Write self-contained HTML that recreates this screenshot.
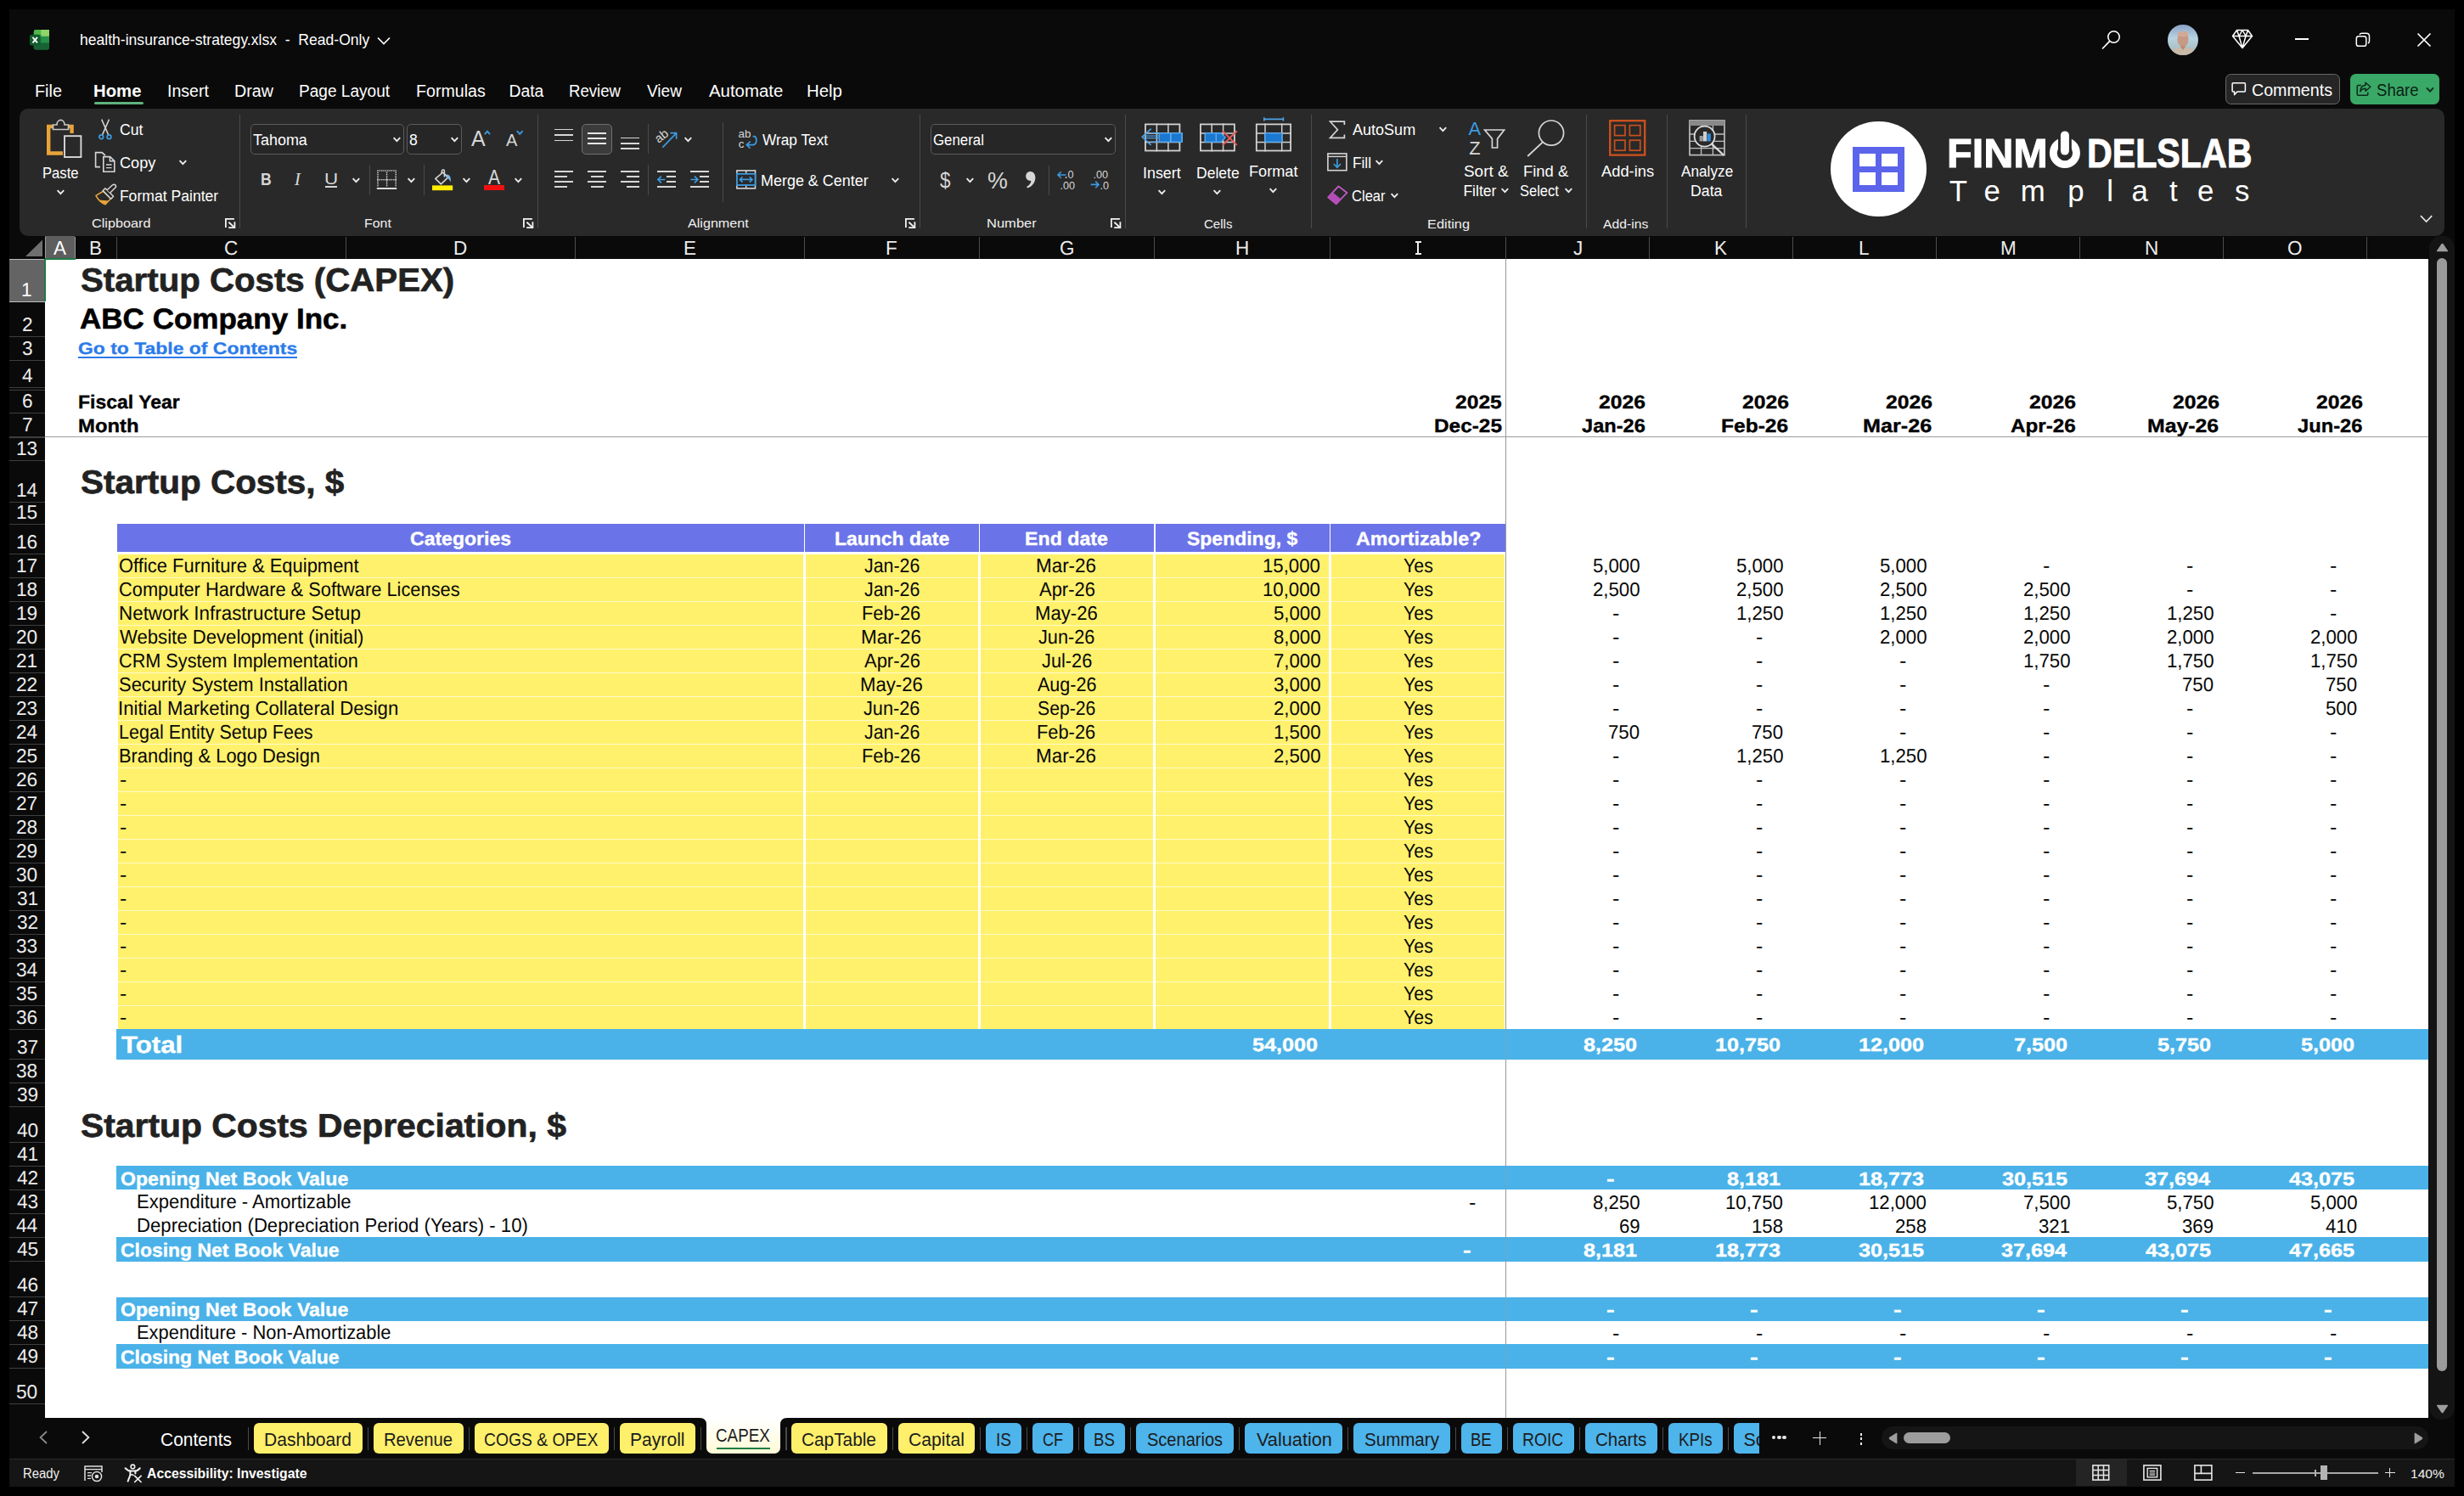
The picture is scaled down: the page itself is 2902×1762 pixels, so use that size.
<!DOCTYPE html>
<html><head><meta charset="utf-8"><title>health-insurance-strategy.xlsx - Excel</title>
<style>
html,body{margin:0;padding:0;background:#000;}
body{width:2902px;height:1762px;position:relative;overflow:hidden;font-family:"Liberation Sans",sans-serif;}
.t{position:absolute;white-space:pre;line-height:1;transform-origin:0 0;display:block;}
.g{text-rendering:geometricPrecision;}
.b{position:absolute;}
svg{position:absolute;overflow:visible;}
</style></head><body>
<div class="b" style="left:11px;top:11px;width:2880px;height:1740px;background:#0a0a0a;"></div>
<svg style="left:35px;top:35.2px" width="23" height="23.4" viewBox="0 0 24 24" preserveAspectRatio="none">
<rect x="5" y="0" width="19" height="24" rx="2.5" fill="#1e7b3d"/>
<rect x="5" y="0" width="19" height="8" rx="2.5" fill="#4fb74a"/>
<rect x="14" y="0" width="10" height="8" fill="#8fd568"/>
<rect x="14" y="0" width="10" height="8" rx="2.5" fill="#8fd568"/>
<rect x="5" y="6" width="9" height="4" fill="#2f9a46"/>
<rect x="14" y="8" width="10" height="8" fill="#27914a"/>
<rect x="5" y="16" width="19" height="6" fill="#176334"/>
<rect x="5" y="20" width="19" height="4" rx="2.5" fill="#176334"/>
<rect x="0" y="6" width="13" height="13" rx="2" fill="#125c2e"/>
<path d="M3.6 9.2 L6.5 12.5 L3.6 15.8 M9.4 9.2 L6.5 12.5 L9.4 15.8" stroke="#fff" stroke-width="1.9" fill="none"/>
</svg>
<span class="t" style="left:94.31px;top:39.40px;font-size:17.8px;color:#fff;transform:scaleX(0.9877);">health-insurance-strategy.xlsx  -  Read-Only</span>
<svg style="left:444px;top:43px" width="16" height="10" viewBox="0 0 16 10"><path d="M1 1.5 L8 8.5 L15 1.5" stroke="#fff" stroke-width="1.7" fill="none"/></svg>
<svg style="left:2475px;top:35px" width="23" height="24" viewBox="0 0 23 24"><circle cx="14.5" cy="8.5" r="6.7" stroke="#fff" stroke-width="1.6" fill="none"/><path d="M9.8 13.4 L1 22.5" stroke="#fff" stroke-width="1.7"/></svg>
<svg style="left:2553px;top:29px" width="36" height="36" viewBox="0 0 36 36">
<defs><clipPath id="av"><circle cx="18" cy="18" r="18"/></clipPath>
<linearGradient id="avg" x1="0" y1="0" x2="0" y2="1"><stop offset="0" stop-color="#8aa3c9"/><stop offset="0.45" stop-color="#b8d3df"/><stop offset="1" stop-color="#9fb7b9"/></linearGradient></defs>
<g clip-path="url(#av)"><rect width="36" height="36" fill="url(#avg)"/>
<ellipse cx="18" cy="17.5" rx="6.6" ry="8.6" fill="#c89a86"/>
<ellipse cx="18" cy="11" rx="6.2" ry="3.2" fill="#d3a994"/>
<path d="M2 36 C4 28 11 26.5 18 26.5 C25 26.5 32 28 34 36 Z" fill="#c9b9a8"/>
<path d="M14.5 25 L18 30 L21.5 25 Z" fill="#b98a76"/>
</g></svg>
<svg style="left:2628px;top:34px" width="26" height="24" viewBox="0 0 26 24"><path d="M6.5 1.5 H19.5 L24.5 8.5 L13 22.5 L1.5 8.5 Z M1.5 8.5 H24.5 M6.5 1.5 L9 8.5 L13 22.5 L17 8.5 L19.5 1.5 M9 8.5 L13 1.5 L17 8.5" stroke="#fff" stroke-width="1.5" fill="none" stroke-linejoin="round"/></svg>
<div class="b" style="left:2703px;top:45.3px;width:16px;height:1.6px;background:#fff;"></div>
<svg style="left:2774px;top:38px" width="18" height="18" viewBox="0 0 18 18"><rect x="1.3" y="4.8" width="11.5" height="11.5" rx="2.6" stroke="#fff" stroke-width="1.5" fill="none"/><path d="M5 2.9 C5.5 1.9 6.3 1.3 7.5 1.3 H13 C15 1.3 16.5 2.8 16.5 4.8 V10.5 C16.5 11.6 16 12.4 15 13" stroke="#fff" stroke-width="1.5" fill="none"/></svg>
<svg style="left:2846px;top:38px" width="18" height="18" viewBox="0 0 18 18"><path d="M1.5 1.5 L16.5 16.5 M16.5 1.5 L1.5 16.5" stroke="#fff" stroke-width="1.7" fill="none"/></svg>
<span class="t" style="left:40.91px;top:97.60px;font-size:19.4px;color:#fff;transform:scaleX(1.0223);">File</span>
<span class="t" style="left:196.74px;top:97.60px;font-size:19.4px;color:#fff;transform:scaleX(1.0074);">Insert</span>
<span class="t" style="left:275.92px;top:97.60px;font-size:19.4px;color:#fff;transform:scaleX(1.0161);">Draw</span>
<span class="t" style="left:351.97px;top:97.60px;font-size:19.4px;color:#fff;transform:scaleX(0.9834);">Page Layout</span>
<span class="t" style="left:489.93px;top:97.60px;font-size:19.4px;color:#fff;transform:scaleX(1.0112);">Formulas</span>
<span class="t" style="left:599.45px;top:97.60px;font-size:19.4px;color:#fff;">Data</span>
<span class="t" style="left:670.01px;top:97.60px;font-size:19.4px;color:#fff;transform:scaleX(0.9577);">Review</span>
<span class="t" style="left:761.95px;top:97.60px;font-size:19.4px;color:#fff;transform:scaleX(0.9830);">View</span>
<span class="t" style="left:834.50px;top:97.60px;font-size:19.4px;color:#fff;transform:scaleX(1.0522);">Automate</span>
<span class="t" style="left:949.87px;top:97.60px;font-size:19.4px;color:#fff;transform:scaleX(1.0522);">Help</span>
<span class="t" style="left:110.18px;top:97.60px;font-size:19.4px;color:#fff;font-weight:bold;transform:scaleX(1.0482);">Home</span>
<div class="b" style="left:111px;top:120px;width:58px;height:3px;background:#5db37e;border-radius:1.5px;"></div>
<div class="b" style="left:2621px;top:87px;width:135px;height:36px;background:#262626;border:1px solid #686868;border-radius:6.5px;box-sizing:border-box;"></div>
<svg style="left:2628px;top:96px" width="18" height="18" viewBox="0 0 18 18"><path d="M2 1.8 H15.5 C16.1 1.8 16.4 2.1 16.4 2.7 V11 C16.4 11.6 16.1 11.9 15.5 11.9 H7 L3.6 15.6 V11.9 H2 C1.4 11.9 1.1 11.6 1.1 11 V2.7 C1.1 2.1 1.4 1.8 2 1.8 Z" stroke="#fff" stroke-width="1.5" fill="none" stroke-linejoin="round"/></svg>
<span class="t" style="left:2651.62px;top:96.60px;font-size:19.4px;color:#fff;transform:scaleX(1.0136);">Comments</span>
<div class="b" style="left:2768px;top:87px;width:105px;height:36px;background:#3aa867;border-radius:6.5px;"></div>
<svg style="left:2774px;top:95px" width="20" height="20" viewBox="0 0 20 20"><path d="M7 5.5 H3.5 C2.7 5.5 2.2 6 2.2 6.8 V16 C2.2 16.8 2.7 17.3 3.5 17.3 H13.5 C14.3 17.3 14.8 16.8 14.8 16 V13.5" stroke="#0d2a18" stroke-width="1.5" fill="none"/><path d="M12 2.2 L17.8 7.2 L12 12.2 V9.2 C9 9.2 7 10.4 5.8 12.8 C6 8.4 8.4 5.6 12 5.2 Z" stroke="#0d2a18" stroke-width="1.5" fill="none" stroke-linejoin="round"/></svg>
<span class="t" style="left:2798.76px;top:96.60px;font-size:19.4px;color:#0a1f12;transform:scaleX(0.9570);">Share</span>
<svg style="left:2857.3px;top:101.6px" width="11" height="8" viewBox="0 0 11 8"><path d="M1 1.4 L5 5.6 L9 1.4" stroke="#0d2a18" stroke-width="1.9" fill="none"/></svg>
<div class="b" style="left:23px;top:128px;width:2856px;height:150px;background:#292929;border-radius:10px;"></div>
<svg style="left:54px;top:140px" width="43" height="47" viewBox="0 0 43 47">
<path d="M9 9 H3.2 V40.5 H20" stroke="#e8a33a" stroke-width="4.4" fill="none"/>
<path d="M25 9 H30.6 V17" stroke="#e8a33a" stroke-width="4.4" fill="none"/>
<path d="M8.5 12.5 V7 H13 C13 3.6 15 1.4 17.5 1.4 C20 1.4 22 3.6 22 7 H26.5 V12.5 Z" stroke="#c8c8c8" stroke-width="1.6" fill="#292929"/>
<rect x="22" y="20.2" width="19.4" height="24.8" stroke="#d8d8d8" stroke-width="1.9" fill="#292929"/>
</svg>
<span class="t" style="left:50.17px;top:195.50px;font-size:17.6px;color:#fff;transform:scaleX(0.9460);">Paste</span>
<svg style="left:66.6px;top:222.70px" width="8.8" height="6.6" viewBox="0 0 8.8 6.6"><path d="M0.6 1.2 L4.4 5.199999999999999 L8.200000000000001 1.2" stroke="#ececec" stroke-width="1.9" fill="none"/></svg>
<svg style="left:114px;top:140px" width="20" height="25" viewBox="0 0 20 25"><path d="M5.7 0.6 L13.7 18.9 M14.5 0.6 L6.5 18.9" stroke="#d6d6d6" stroke-width="1.5" fill="none"/>
<circle cx="5.3" cy="21.3" r="2.35" stroke="#3c9be0" stroke-width="1.7" fill="none"/><circle cx="14.5" cy="21.3" r="2.35" stroke="#3c9be0" stroke-width="1.7" fill="none"/></svg>
<span class="t" style="left:141.42px;top:144.50px;font-size:17.6px;color:#fff;transform:scaleX(1.0038);">Cut</span>
<svg style="left:111px;top:178px" width="26" height="26" viewBox="0 0 26 26"><path d="M7 18.6 H1.6 V1.6 H9.2 L13 5.2" stroke="#d6d6d6" stroke-width="1.6" fill="none"/>
<path d="M10.8 6.6 H18.6 L23.8 11.6 V24.2 H10.8 Z" stroke="#d6d6d6" stroke-width="1.6" fill="#292929"/>
<path d="M18.4 6.8 V11.8 H23.6" stroke="#d6d6d6" stroke-width="1.4" fill="none"/>
<path d="M14 16 H20.6 M14 19.6 H20.6" stroke="#d6d6d6" stroke-width="1.4"/></svg>
<span class="t" style="left:141.39px;top:183.50px;font-size:17.6px;color:#fff;transform:scaleX(1.0319);">Copy</span>
<svg style="left:211px;top:187.70px" width="8.8" height="6.6" viewBox="0 0 8.8 6.6"><path d="M0.6 1.2 L4.4 5.199999999999999 L8.200000000000001 1.2" stroke="#ececec" stroke-width="1.9" fill="none"/></svg>
<svg style="left:112px;top:216px" width="26" height="26" viewBox="0 0 26 26"><path d="M1 14.4 L9.6 9.2 L18.4 18 L12 24.8 Q4.6 21.8 1 14.4 Z" stroke="#e8a33a" stroke-width="1.6" fill="none" stroke-linejoin="round"/>
<path d="M5 19.4 L16 20.6 L12 24.8 Q7.6 23 5 19.4 Z" fill="#e8a33a"/>
<path d="M9.2 8.6 L12 5.8 L21.6 15.2 L18.8 18.2 Z" stroke="#d6d6d6" stroke-width="1.5" fill="#292929" stroke-linejoin="round"/>
<path d="M14.2 7.8 L20.6 1.8 C21.8 0.8 23.2 1 24 2 C24.8 3 24.6 4.2 23.8 5 L17.6 11.2" stroke="#d6d6d6" stroke-width="1.5" fill="#292929"/></svg>
<span class="t" style="left:140.89px;top:222.50px;font-size:17.6px;color:#fff;">Format Painter</span>
<span class="t" style="left:108.49px;top:255.10px;font-size:15.4px;color:#f0f0f0;transform:scaleX(1.0549);">Clipboard</span>
<svg style="left:265px;top:257px" width="13" height="13" viewBox="0 0 13 13"><path d="M0.9 11 V0.9 H10.9" stroke="#f2f2f2" stroke-width="1.8" fill="none"/><path d="M4.4 4.8 L10.8 10.6" stroke="#f2f2f2" stroke-width="1.9" fill="none"/><path d="M4.2 11.2 H11.4 V4.2" stroke="#f2f2f2" stroke-width="1.8" fill="none"/></svg>
<div class="b" style="left:282.0px;top:135px;width:1px;height:134px;background:#4a4a4a;"></div>
<div class="b" style="left:295px;top:146px;width:180.5px;height:36px;background:#262626;border:1px solid #5c5c5c;border-radius:5px;box-sizing:border-box;"></div>
<span class="t" style="left:297.94px;top:156.50px;font-size:17.6px;color:#fff;transform:scaleX(1.0192);">Tahoma</span>
<svg style="left:462.5px;top:160.70px" width="8.8" height="6.6" viewBox="0 0 8.8 6.6"><path d="M0.6 1.2 L4.4 5.199999999999999 L8.200000000000001 1.2" stroke="#ececec" stroke-width="1.9" fill="none"/></svg>
<div class="b" style="left:479px;top:146px;width:65px;height:36px;background:#262626;border:1px solid #5c5c5c;border-radius:5px;box-sizing:border-box;"></div>
<span class="t" style="left:482.05px;top:156.50px;font-size:17.6px;color:#fff;">8</span>
<svg style="left:530.5px;top:160.70px" width="8.8" height="6.6" viewBox="0 0 8.8 6.6"><path d="M0.6 1.2 L4.4 5.199999999999999 L8.200000000000001 1.2" stroke="#ececec" stroke-width="1.9" fill="none"/></svg>
<span class="t" style="left:554.60px;top:150.30px;font-size:26px;color:#d6d6d6;transform:scaleX(0.9601);">A</span>
<svg style="left:569.6px;top:152.6px" width="8" height="6" viewBox="0 0 8 6"><path d="M0.8 5.2 L3.9 1.6 L7 5.2" stroke="#3c9be0" stroke-width="1.9" fill="none"/></svg>
<span class="t" style="left:596.00px;top:154.30px;font-size:21px;color:#d6d6d6;transform:scaleX(0.9524);">A</span>
<svg style="left:608.2px;top:152.8px" width="9" height="6" viewBox="0 0 9 6"><path d="M0.8 1.2 L4.2 4.8 L7.6 1.2" stroke="#3c9be0" stroke-width="1.9" fill="none"/></svg>
<span class="t" style="left:306.75px;top:201.30px;font-size:20px;color:#d6d6d6;font-weight:bold;transform:scaleX(0.8816);">B</span>
<span class="t" style="left:346.67px;top:200.55px;font-size:21.5px;color:#d6d6d6;font-style:italic;font-family:'Liberation Serif',serif;">I</span>
<span class="t" style="left:381.92px;top:201.50px;font-size:18.6px;color:#d6d6d6;transform:scaleX(1.2020);">U</span>
<div class="b" style="left:383.3px;top:219.2px;width:13.6px;height:1.7px;background:#d6d6d6;"></div>
<svg style="left:415px;top:209.20px" width="8.8" height="6.6" viewBox="0 0 8.8 6.6"><path d="M0.6 1.2 L4.4 5.199999999999999 L8.200000000000001 1.2" stroke="#ececec" stroke-width="1.9" fill="none"/></svg>
<div class="b" style="left:434.5px;top:194px;width:1px;height:35.5px;background:#4a4a4a;"></div>
<svg style="left:443px;top:199px" width="25" height="25" viewBox="0 0 25 25"><g fill="#e4e4e4"><rect x="1.30" y="1.30" width="1.35" height="1.35"/><rect x="1.30" y="12.00" width="1.35" height="1.35"/><rect x="3.66" y="1.30" width="1.35" height="1.35"/><rect x="3.66" y="12.00" width="1.35" height="1.35"/><rect x="6.01" y="1.30" width="1.35" height="1.35"/><rect x="6.01" y="12.00" width="1.35" height="1.35"/><rect x="8.37" y="1.30" width="1.35" height="1.35"/><rect x="8.37" y="12.00" width="1.35" height="1.35"/><rect x="10.72" y="1.30" width="1.35" height="1.35"/><rect x="10.72" y="12.00" width="1.35" height="1.35"/><rect x="13.08" y="1.30" width="1.35" height="1.35"/><rect x="13.08" y="12.00" width="1.35" height="1.35"/><rect x="15.43" y="1.30" width="1.35" height="1.35"/><rect x="15.43" y="12.00" width="1.35" height="1.35"/><rect x="17.79" y="1.30" width="1.35" height="1.35"/><rect x="17.79" y="12.00" width="1.35" height="1.35"/><rect x="20.14" y="1.30" width="1.35" height="1.35"/><rect x="20.14" y="12.00" width="1.35" height="1.35"/><rect x="22.50" y="1.30" width="1.35" height="1.35"/><rect x="22.50" y="12.00" width="1.35" height="1.35"/><rect x="1.30" y="3.53" width="1.35" height="1.35"/><rect x="22.50" y="3.53" width="1.35" height="1.35"/><rect x="11.90" y="3.53" width="1.35" height="1.35"/><rect x="1.30" y="5.75" width="1.35" height="1.35"/><rect x="22.50" y="5.75" width="1.35" height="1.35"/><rect x="11.90" y="5.75" width="1.35" height="1.35"/><rect x="1.30" y="7.97" width="1.35" height="1.35"/><rect x="22.50" y="7.97" width="1.35" height="1.35"/><rect x="11.90" y="7.97" width="1.35" height="1.35"/><rect x="1.30" y="10.20" width="1.35" height="1.35"/><rect x="22.50" y="10.20" width="1.35" height="1.35"/><rect x="11.90" y="10.20" width="1.35" height="1.35"/><rect x="1.30" y="12.43" width="1.35" height="1.35"/><rect x="22.50" y="12.43" width="1.35" height="1.35"/><rect x="11.90" y="12.43" width="1.35" height="1.35"/><rect x="1.30" y="14.65" width="1.35" height="1.35"/><rect x="22.50" y="14.65" width="1.35" height="1.35"/><rect x="11.90" y="14.65" width="1.35" height="1.35"/><rect x="1.30" y="16.88" width="1.35" height="1.35"/><rect x="22.50" y="16.88" width="1.35" height="1.35"/><rect x="11.90" y="16.88" width="1.35" height="1.35"/><rect x="1.30" y="19.10" width="1.35" height="1.35"/><rect x="22.50" y="19.10" width="1.35" height="1.35"/><rect x="11.90" y="19.10" width="1.35" height="1.35"/></g>
<path d="M0.8 23 H24.2" stroke="#f0f0f0" stroke-width="1.8"/></svg>
<svg style="left:480px;top:209.20px" width="8.8" height="6.6" viewBox="0 0 8.8 6.6"><path d="M0.6 1.2 L4.4 5.199999999999999 L8.200000000000001 1.2" stroke="#ececec" stroke-width="1.9" fill="none"/></svg>
<div class="b" style="left:499.0px;top:194px;width:1px;height:35.5px;background:#4a4a4a;"></div>
<svg style="left:509px;top:199px" width="26" height="26" viewBox="0 0 26 26"><path d="M3.8 11.4 L10.4 17.9 L18.5 10.1 L12.8 4 Z" stroke="#d6d6d6" stroke-width="1.6" fill="none" stroke-linejoin="round"/>
<path d="M10.9 5.6 L11.5 2 Q11.7 1.2 12.6 1.1 L13.4 1.1 Q14.4 1.2 14.4 2.2 L14.4 9.6" stroke="#d6d6d6" stroke-width="1.5" fill="none"/>
<path d="M16.6 6.6 C20.2 5.8 22.6 9.6 21.7 15.6 C20.4 12.4 18.8 10.9 16.9 10.3 Z" fill="#7db9ee"/>
<rect x="0" y="19.4" width="24.2" height="5.8" fill="#ffee00"/></svg>
<svg style="left:545px;top:209.20px" width="8.8" height="6.6" viewBox="0 0 8.8 6.6"><path d="M0.6 1.2 L4.4 5.199999999999999 L8.200000000000001 1.2" stroke="#ececec" stroke-width="1.9" fill="none"/></svg>
<span class="t" style="left:575.20px;top:196.80px;font-size:24px;color:#d6d6d6;transform:scaleX(0.8772);">A</span>
<div class="b" style="left:570px;top:218.4px;width:24.4px;height:5.8px;background:#f01010;"></div>
<svg style="left:605.5px;top:209.20px" width="8.8" height="6.6" viewBox="0 0 8.8 6.6"><path d="M0.6 1.2 L4.4 5.199999999999999 L8.200000000000001 1.2" stroke="#ececec" stroke-width="1.9" fill="none"/></svg>
<span class="t" style="left:429.23px;top:255.10px;font-size:15.4px;color:#f0f0f0;transform:scaleX(1.0342);">Font</span>
<svg style="left:616px;top:257px" width="13" height="13" viewBox="0 0 13 13"><path d="M0.9 11 V0.9 H10.9" stroke="#f2f2f2" stroke-width="1.8" fill="none"/><path d="M4.4 4.8 L10.8 10.6" stroke="#f2f2f2" stroke-width="1.9" fill="none"/><path d="M4.2 11.2 H11.4 V4.2" stroke="#f2f2f2" stroke-width="1.8" fill="none"/></svg>
<div class="b" style="left:633.25px;top:135px;width:1px;height:134px;background:#4a4a4a;"></div>
<div class="b" style="left:653px;top:151.79999999999998px;width:22px;height:1.6px;background:#d6d6d6;"></div>
<div class="b" style="left:653px;top:158.2px;width:22px;height:1.6px;background:#d6d6d6;"></div>
<div class="b" style="left:653px;top:164.6px;width:22px;height:1.6px;background:#d6d6d6;"></div>
<div class="b" style="left:685px;top:146px;width:35.5px;height:36px;background:#3b3b3b;border:1px solid #707070;border-radius:5px;box-sizing:border-box;"></div>
<div class="b" style="left:692px;top:156.2px;width:22px;height:1.6px;background:#e6e6e6;"></div>
<div class="b" style="left:692px;top:162.2px;width:22px;height:1.6px;background:#e6e6e6;"></div>
<div class="b" style="left:692px;top:168.2px;width:22px;height:1.6px;background:#e6e6e6;"></div>
<div class="b" style="left:731px;top:161.79999999999998px;width:22px;height:1.6px;background:#d6d6d6;"></div>
<div class="b" style="left:731px;top:168.0px;width:22px;height:1.6px;background:#d6d6d6;"></div>
<div class="b" style="left:731px;top:174.2px;width:22px;height:1.6px;background:#d6d6d6;"></div>
<div class="b" style="left:762.5px;top:146px;width:1px;height:35px;background:#4a4a4a;"></div>
<svg style="left:771px;top:150px" width="28" height="26" viewBox="0 0 28 26"><g transform="rotate(-38 9 10)"><text x="0" y="14.5" font-family="Liberation Sans" font-size="14.5" fill="#d6d6d6">ab</text></g>
<path d="M9.4 23.6 L25 7.4 M18.4 6.6 L25.6 6.6 L25.6 13.8" stroke="#3c9be0" stroke-width="1.7" fill="none"/></svg>
<svg style="left:805.8px;top:161.20px" width="8.8" height="6.6" viewBox="0 0 8.8 6.6"><path d="M0.6 1.2 L4.4 5.199999999999999 L8.200000000000001 1.2" stroke="#ececec" stroke-width="1.9" fill="none"/></svg>
<div class="b" style="left:850.5px;top:143.75px;width:1px;height:93.75px;background:#4a4a4a;"></div>
<svg style="left:869px;top:152px" width="24" height="25" viewBox="0 0 24 25"><text x="0.6" y="10.4" font-family="Liberation Sans" font-size="13.4" fill="#d6d6d6">ab</text>
<text x="0.8" y="22.2" font-family="Liberation Sans" font-size="13.4" fill="#d6d6d6">c</text>
<path d="M17.6 8.6 H19.6 C22.8 10 22.8 17.4 18.4 18.6 H10.6 M14.6 14.6 L10.4 18.6 L14.6 22.6" stroke="#3c9be0" stroke-width="1.7" fill="none"/></svg>
<span class="t" style="left:897.76px;top:156.50px;font-size:17.6px;color:#fff;transform:scaleX(0.9815);">Wrap Text</span>
<div class="b" style="left:653px;top:201.2px;width:22px;height:1.6px;background:#d6d6d6;"></div>
<div class="b" style="left:653px;top:207.2px;width:15px;height:1.6px;background:#d6d6d6;"></div>
<div class="b" style="left:653px;top:213.2px;width:22px;height:1.6px;background:#d6d6d6;"></div>
<div class="b" style="left:653px;top:219.2px;width:15px;height:1.6px;background:#d6d6d6;"></div>
<div class="b" style="left:692px;top:201.2px;width:22px;height:1.6px;background:#d6d6d6;"></div>
<div class="b" style="left:695.5px;top:207.2px;width:15.0px;height:1.6px;background:#d6d6d6;"></div>
<div class="b" style="left:692px;top:213.2px;width:22px;height:1.6px;background:#d6d6d6;"></div>
<div class="b" style="left:695.5px;top:219.2px;width:15.0px;height:1.6px;background:#d6d6d6;"></div>
<div class="b" style="left:731px;top:201.2px;width:22px;height:1.6px;background:#d6d6d6;"></div>
<div class="b" style="left:738px;top:207.2px;width:15px;height:1.6px;background:#d6d6d6;"></div>
<div class="b" style="left:731px;top:213.2px;width:22px;height:1.6px;background:#d6d6d6;"></div>
<div class="b" style="left:738px;top:219.2px;width:15px;height:1.6px;background:#d6d6d6;"></div>
<div class="b" style="left:762.5px;top:193.75px;width:1px;height:36.25px;background:#4a4a4a;"></div>
<div class="b" style="left:773.75px;top:201.2px;width:22px;height:1.6px;background:#d6d6d6;"></div>
<div class="b" style="left:773.75px;top:219.2px;width:22px;height:1.6px;background:#d6d6d6;"></div>
<div class="b" style="left:784.75px;top:207.2px;width:11px;height:1.6px;background:#d6d6d6;"></div>
<div class="b" style="left:784.75px;top:213.2px;width:11px;height:1.6px;background:#d6d6d6;"></div>
<svg style="left:773.75px;top:205.5px" width="11" height="11" viewBox="0 0 11 11"><path d="M9.4 5.5 H1.2 M4.8 1.6 L0.9 5.5 L4.8 9.4" stroke="#3c9be0" stroke-width="1.7" fill="none"/></svg>
<div class="b" style="left:812.75px;top:201.2px;width:22px;height:1.6px;background:#d6d6d6;"></div>
<div class="b" style="left:812.75px;top:219.2px;width:22px;height:1.6px;background:#d6d6d6;"></div>
<div class="b" style="left:823.75px;top:207.2px;width:11px;height:1.6px;background:#d6d6d6;"></div>
<div class="b" style="left:823.75px;top:213.2px;width:11px;height:1.6px;background:#d6d6d6;"></div>
<svg style="left:812.75px;top:205.5px" width="11" height="11" viewBox="0 0 11 11"><path d="M0.4 5.5 H8.6 M5 1.6 L8.9 5.5 L5 9.4" stroke="#3c9be0" stroke-width="1.7" fill="none"/></svg>
<svg style="left:867px;top:200px" width="24" height="23" viewBox="0 0 24 23"><rect x="0.9" y="0.9" width="21.6" height="21" stroke="#d6d6d6" stroke-width="1.6" fill="none"/>
<path d="M11.7 0.9 V4.6 M11.7 18.2 V21.9" stroke="#d6d6d6" stroke-width="1.5"/>
<rect x="0.9" y="4.8" width="21.6" height="13.2" stroke="#3c9be0" stroke-width="1.8" fill="#292929"/>
<path d="M4.6 11.4 H18.8 M7.6 8.2 L4.4 11.4 L7.6 14.6 M15.8 8.2 L19 11.4 L15.8 14.6" stroke="#3c9be0" stroke-width="1.6" fill="none"/></svg>
<span class="t" style="left:896.36px;top:204.50px;font-size:17.6px;color:#fff;transform:scaleX(1.0201);">Merge &amp; Center</span>
<svg style="left:1050px;top:209.20px" width="8.8" height="6.6" viewBox="0 0 8.8 6.6"><path d="M0.6 1.2 L4.4 5.199999999999999 L8.200000000000001 1.2" stroke="#ececec" stroke-width="1.9" fill="none"/></svg>
<span class="t" style="left:810.30px;top:255.10px;font-size:15.4px;color:#f0f0f0;transform:scaleX(1.0480);">Alignment</span>
<svg style="left:1066px;top:257px" width="13" height="13" viewBox="0 0 13 13"><path d="M0.9 11 V0.9 H10.9" stroke="#f2f2f2" stroke-width="1.8" fill="none"/><path d="M4.4 4.8 L10.8 10.6" stroke="#f2f2f2" stroke-width="1.9" fill="none"/><path d="M4.2 11.2 H11.4 V4.2" stroke="#f2f2f2" stroke-width="1.8" fill="none"/></svg>
<div class="b" style="left:1083.25px;top:135px;width:1px;height:134px;background:#4a4a4a;"></div>
<div class="b" style="left:1096px;top:146px;width:217.75px;height:36px;background:#262626;border:1px solid #5c5c5c;border-radius:5px;box-sizing:border-box;"></div>
<span class="t" style="left:1098.96px;top:156.50px;font-size:17.6px;color:#fff;transform:scaleX(0.9573);">General</span>
<svg style="left:1300.75px;top:160.70px" width="8.8" height="6.6" viewBox="0 0 8.8 6.6"><path d="M0.6 1.2 L4.4 5.199999999999999 L8.200000000000001 1.2" stroke="#ececec" stroke-width="1.9" fill="none"/></svg>
<span class="t" style="left:1107.07px;top:199.80px;font-size:25px;color:#d6d6d6;transform:scaleX(0.9014);">$</span>
<svg style="left:1138px;top:209.20px" width="8.8" height="6.6" viewBox="0 0 8.8 6.6"><path d="M0.6 1.2 L4.4 5.199999999999999 L8.200000000000001 1.2" stroke="#ececec" stroke-width="1.9" fill="none"/></svg>
<span class="t" style="left:1163.06px;top:199.05px;font-size:27.5px;color:#d6d6d6;transform:scaleX(0.9756);">%</span>
<svg style="left:1207px;top:201px" width="14" height="22" viewBox="0 0 14 22"><path d="M6.4 1 C9.8 1 12.4 3.8 12.4 8.2 C12.4 14 8.6 18.6 3 20.6 L2.2 18.8 C5.4 17.2 7.2 14.8 7.4 12 C4 12.4 1.2 10 1.2 6.6 C1.2 3.4 3.4 1 6.4 1 Z" fill="#d6d6d6"/></svg>
<div class="b" style="left:1235.0px;top:194.5px;width:1px;height:35.5px;background:#4a4a4a;"></div>
<svg style="left:1244.5px;top:199px" width="25" height="25" viewBox="0 0 25 25"><path d="M1.2 7 H10.4 M4.8 3.2 L1 7 L4.8 10.8" stroke="#3c9be0" stroke-width="1.6" fill="none"/>
<text x="12.6" y="11" font-family="Liberation Sans" font-size="12.6" fill="#d6d6d6">0</text>
<text x="3.4" y="23.6" font-family="Liberation Sans" font-size="12.6" fill="#d6d6d6">.00</text>
<circle cx="10.6" cy="10" r="0.9" fill="#d6d6d6"/></svg>
<svg style="left:1283.5px;top:199px" width="25" height="25" viewBox="0 0 25 25"><text x="3.4" y="11" font-family="Liberation Sans" font-size="12.6" fill="#d6d6d6">.00</text>
<path d="M0.6 18.4 H10 M6.2 14.6 L10 18.4 L6.2 22.2" stroke="#3c9be0" stroke-width="1.6" fill="none"/>
<text x="11.6" y="23.6" font-family="Liberation Sans" font-size="12.6" fill="#d6d6d6">.0</text></svg>
<span class="t" style="left:1161.98px;top:255.10px;font-size:15.4px;color:#f0f0f0;transform:scaleX(1.0735);">Number</span>
<svg style="left:1308px;top:257px" width="13" height="13" viewBox="0 0 13 13"><path d="M0.9 11 V0.9 H10.9" stroke="#f2f2f2" stroke-width="1.8" fill="none"/><path d="M4.4 4.8 L10.8 10.6" stroke="#f2f2f2" stroke-width="1.9" fill="none"/><path d="M4.2 11.2 H11.4 V4.2" stroke="#f2f2f2" stroke-width="1.8" fill="none"/></svg>
<div class="b" style="left:1325.0px;top:135px;width:1px;height:134px;background:#4a4a4a;"></div>
<svg style="left:1340px;top:136px" width="190" height="46" viewBox="0 0 190 46"><rect x="9.00" y="10.40" width="40.40" height="31.10" stroke="#d2d2d2" stroke-width="1.8" fill="none"/><path d="M22.40 9.50 V42.40" stroke="#d2d2d2" stroke-width="1.5"/><path d="M35.90 9.50 V42.40" stroke="#d2d2d2" stroke-width="1.5"/><path d="M8.10 20.90 H50.30" stroke="#d2d2d2" stroke-width="1.5"/><path d="M8.10 31.40 H50.30" stroke="#d2d2d2" stroke-width="1.5"/><rect x="24.60" y="20.10" width="28.4" height="11.8" fill="#5aa9ec"/><path d="M15.00 20.80 H26 M15.00 31.20 H26" stroke="#5aa9ec" stroke-width="1.4" fill="none"/><rect x="25.80" y="21.40" width="12.2" height="9.2" fill="#1b78d0"/><rect x="39.70" y="21.40" width="11.6" height="9.2" fill="#1b78d0"/><path d="M15.70 15.60 L5.30 25.30 L15.70 35.00" stroke="#4ea3e6" stroke-width="1.7" fill="none"/><path d="M7.50 24.20 H25 M7.50 26.60 H25" stroke="#4ea3e6" stroke-width="1.2" fill="none"/><rect x="73.90" y="10.40" width="40.00" height="31.10" stroke="#d2d2d2" stroke-width="1.8" fill="none"/><path d="M87.20 9.50 V42.40" stroke="#d2d2d2" stroke-width="1.5"/><path d="M100.60 9.50 V42.40" stroke="#d2d2d2" stroke-width="1.5"/><path d="M73.00 20.90 H114.80" stroke="#d2d2d2" stroke-width="1.5"/><path d="M73.00 31.40 H114.80" stroke="#d2d2d2" stroke-width="1.5"/><path d="M78.50 20.10 H98.40 L104.20 26.00 L98.40 31.90 H78.50 Z" fill="#5aa9ec"/><rect x="80.00" y="21.40" width="11.6" height="9.2" fill="#1b78d0"/><path d="M93.00 21.40 H98.00 L102.40 26.00 L98.00 30.60 H93.00 Z" fill="#1b78d0"/><path d="M99.80 18.30 L116.70 35.00 M116.70 18.30 L99.80 35.00" stroke="#e25d5d" stroke-width="2" fill="none"/><rect x="139.80" y="10.40" width="40.30" height="31.10" stroke="#d2d2d2" stroke-width="1.8" fill="none"/><path d="M150.00 9.50 V42.40" stroke="#d2d2d2" stroke-width="1.5"/><path d="M169.70 9.50 V42.40" stroke="#d2d2d2" stroke-width="1.5"/><path d="M138.90 20.90 H181.00" stroke="#d2d2d2" stroke-width="1.5"/><path d="M138.90 31.40 H181.00" stroke="#d2d2d2" stroke-width="1.5"/><rect x="149.20" y="20.10" width="21.4" height="11.8" fill="#5aa9ec"/><rect x="150.60" y="21.40" width="18.6" height="9.2" fill="#1b78d0"/><path d="M148.60 4.40 H171.60 M148.80 2.20 V6.60 M171.40 2.20 V6.60" stroke="#4ea3e6" stroke-width="1.6" fill="none"/></svg>
<span class="t" style="left:1346.19px;top:195.50px;font-size:17.6px;color:#fff;transform:scaleX(1.0159);">Insert</span>
<svg style="left:1363.75px;top:222.70px" width="8.8" height="6.6" viewBox="0 0 8.8 6.6"><path d="M0.6 1.2 L4.4 5.199999999999999 L8.200000000000001 1.2" stroke="#ececec" stroke-width="1.9" fill="none"/></svg>
<span class="t" style="left:1408.90px;top:195.50px;font-size:17.6px;color:#fff;transform:scaleX(0.9957);">Delete</span>
<svg style="left:1428.75px;top:222.70px" width="8.8" height="6.6" viewBox="0 0 8.8 6.6"><path d="M0.6 1.2 L4.4 5.199999999999999 L8.200000000000001 1.2" stroke="#ececec" stroke-width="1.9" fill="none"/></svg>
<span class="t" style="left:1471.35px;top:193.50px;font-size:17.6px;color:#fff;transform:scaleX(1.0322);">Format</span>
<svg style="left:1494.6px;top:220.70px" width="8.8" height="6.6" viewBox="0 0 8.8 6.6"><path d="M0.6 1.2 L4.4 5.199999999999999 L8.200000000000001 1.2" stroke="#ececec" stroke-width="1.9" fill="none"/></svg>
<span class="t" style="left:1417.55px;top:256.10px;font-size:15.4px;color:#f0f0f0;transform:scaleX(0.9782);">Cells</span>
<div class="b" style="left:1544.0px;top:135px;width:1px;height:134px;background:#4a4a4a;"></div>
<svg style="left:1564.5px;top:141.5px" width="20" height="22" viewBox="0 0 20 22"><path d="M18.4 5 V1.2 H1.6 L10.4 10.8 L1.6 20.4 H18.4 V16.6" stroke="#d6d6d6" stroke-width="1.7" fill="none" stroke-linejoin="miter"/></svg>
<span class="t" style="left:1593.30px;top:144.50px;font-size:17.6px;color:#fff;transform:scaleX(1.0248);">AutoSum</span>
<svg style="left:1695px;top:149.20px" width="8.8" height="6.6" viewBox="0 0 8.8 6.6"><path d="M0.6 1.2 L4.4 5.199999999999999 L8.200000000000001 1.2" stroke="#ececec" stroke-width="1.9" fill="none"/></svg>
<svg style="left:1563px;top:180px" width="24" height="22" viewBox="0 0 24 22"><rect x="0.9" y="0.9" width="22" height="19.8" stroke="#d6d6d6" stroke-width="1.6" fill="none"/>
<path d="M0.9 4.4 H22.9" stroke="#d6d6d6" stroke-width="1.4"/>
<path d="M11.9 7 V17 M7.8 13 L11.9 17.2 L16 13" stroke="#3c9be0" stroke-width="1.7" fill="none"/></svg>
<span class="t" style="left:1592.62px;top:183.50px;font-size:17.6px;color:#fff;transform:scaleX(0.9783);">Fill</span>
<svg style="left:1620px;top:187.70px" width="8.8" height="6.6" viewBox="0 0 8.8 6.6"><path d="M0.6 1.2 L4.4 5.199999999999999 L8.200000000000001 1.2" stroke="#ececec" stroke-width="1.9" fill="none"/></svg>
<svg style="left:1562.5px;top:218px" width="25" height="24" viewBox="0 0 25 24"><path d="M13.4 1.4 L23.4 9 L10.8 22.2 L1.2 14.4 Z" stroke="#c65ac8" stroke-width="1.8" fill="none" stroke-linejoin="round"/>
<path d="M6.6 8.6 L16.4 16.4 L10.8 22.2 L1.2 14.4 Z" fill="#b44db8"/></svg>
<span class="t" style="left:1592.47px;top:222.50px;font-size:17.6px;color:#fff;transform:scaleX(0.9409);">Clear</span>
<svg style="left:1638px;top:227.20px" width="8.8" height="6.6" viewBox="0 0 8.8 6.6"><path d="M0.6 1.2 L4.4 5.199999999999999 L8.200000000000001 1.2" stroke="#ececec" stroke-width="1.9" fill="none"/></svg>
<svg style="left:1729px;top:140.5px" width="44" height="43" viewBox="0 0 44 43"><text x="0.4" y="17.6" font-family="Liberation Sans" font-size="22" fill="#3c9be0">A</text>
<text x="1.2" y="41.4" font-family="Liberation Sans" font-size="22" fill="#d6d6d6">Z</text>
<path d="M19.6 12 H42.6 L34.6 22.4 V33 H28.4 V22.4 Z" stroke="#d6d6d6" stroke-width="1.7" fill="none" stroke-linejoin="miter"/></svg>
<span class="t" style="left:1724.45px;top:193.50px;font-size:17.6px;color:#fff;transform:scaleX(1.0758);">Sort &amp;</span>
<span class="t" style="left:1723.39px;top:216.50px;font-size:17.6px;color:#fff;">Filter</span>
<svg style="left:1768px;top:221.20px" width="8.8" height="6.6" viewBox="0 0 8.8 6.6"><path d="M0.6 1.2 L4.4 5.199999999999999 L8.200000000000001 1.2" stroke="#ececec" stroke-width="1.9" fill="none"/></svg>
<svg style="left:1798px;top:140.5px" width="46" height="44" viewBox="0 0 46 44"><circle cx="29" cy="15.6" r="14.6" stroke="#d6d6d6" stroke-width="1.7" fill="none"/>
<path d="M19 26.4 L1.2 43" stroke="#d6d6d6" stroke-width="1.9" fill="none"/></svg>
<span class="t" style="left:1794.33px;top:193.50px;font-size:17.6px;color:#fff;transform:scaleX(1.0469);">Find &amp;</span>
<span class="t" style="left:1790.06px;top:216.50px;font-size:17.6px;color:#fff;transform:scaleX(0.9366);">Select</span>
<svg style="left:1842.5px;top:221.20px" width="8.8" height="6.6" viewBox="0 0 8.8 6.6"><path d="M0.6 1.2 L4.4 5.199999999999999 L8.200000000000001 1.2" stroke="#ececec" stroke-width="1.9" fill="none"/></svg>
<span class="t" style="left:1680.99px;top:256.10px;font-size:15.4px;color:#f0f0f0;transform:scaleX(1.0626);">Editing</span>
<div class="b" style="left:1867.75px;top:135px;width:1px;height:134px;background:#4a4a4a;"></div>
<svg style="left:1894.5px;top:140.5px" width="44" height="43" viewBox="0 0 44 43"><rect x="1.2" y="1.2" width="41" height="40.4" stroke="#c8501e" stroke-width="2.4" fill="none"/>
<rect x="6.6" y="6.6" width="12.4" height="12" stroke="#c8501e" stroke-width="1.7" fill="none"/>
<rect x="24.4" y="6.6" width="12.4" height="12" stroke="#c8501e" stroke-width="1.7" fill="none"/>
<rect x="6.6" y="24.2" width="12.4" height="12" stroke="#c8501e" stroke-width="1.7" fill="none"/>
<rect x="24.4" y="24.2" width="12.4" height="12" stroke="#c8501e" stroke-width="1.7" fill="none"/></svg>
<span class="t" style="left:1885.80px;top:193.50px;font-size:17.6px;color:#fff;transform:scaleX(1.0415);">Add-ins</span>
<span class="t" style="left:1888.30px;top:256.10px;font-size:15.4px;color:#f0f0f0;transform:scaleX(1.0200);">Add-ins</span>
<div class="b" style="left:1962.75px;top:135px;width:1px;height:134px;background:#4a4a4a;"></div>
<svg style="left:1988.5px;top:140.5px" width="44" height="43" viewBox="0 0 44 43"><rect x="1" y="1" width="41" height="40.6" stroke="#bdbdbd" stroke-width="1.7" fill="none"/>
<rect x="1" y="1" width="41" height="6" fill="#8a8a8a"/>
<path d="M1 17 H42 M1 25.4 H42 M1 33.6 H42 M14.6 7 V41.6 M28.4 7 V41.6" stroke="#bdbdbd" stroke-width="1.4"/>
<circle cx="18.6" cy="19.6" r="12" fill="#292929" stroke="#dcdcdc" stroke-width="1.8"/>
<rect x="12.6" y="19" width="4.2" height="6.4" fill="#9a9a9a"/><rect x="17" y="14" width="4.2" height="11.4" fill="#d0d0d0"/><rect x="21.6" y="16.4" width="4.2" height="9" fill="#2f8fe0"/>
<path d="M27 28.6 L41.4 42" stroke="#dcdcdc" stroke-width="2.2"/></svg>
<span class="t" style="left:1980.30px;top:193.50px;font-size:17.6px;color:#fff;transform:scaleX(0.9780);">Analyze</span>
<span class="t" style="left:1991.38px;top:216.50px;font-size:17.6px;color:#fff;transform:scaleX(1.0064);">Data</span>
<div class="b" style="left:2055.75px;top:135px;width:1px;height:134px;background:#4a4a4a;"></div>
<div class="b" style="left:2156px;top:142.5px;width:112.6px;height:112.6px;border-radius:50%;background:#fff;"></div>
<div class="b" style="left:2181.75px;top:173px;width:61.25px;height:52.75px;background:#5b64ea;"></div>
<div class="b" style="left:2190px;top:181.25px;width:18.75px;height:14.4px;background:#fff;"></div>
<div class="b" style="left:2216.25px;top:181.25px;width:18.75px;height:14.4px;background:#fff;"></div>
<div class="b" style="left:2190px;top:203.25px;width:18.75px;height:14.4px;background:#fff;"></div>
<div class="b" style="left:2216.25px;top:203.25px;width:18.75px;height:14.4px;background:#fff;"></div>
<span class="t" style="left:2293.44px;top:156.80px;font-size:48px;color:#fff;font-weight:bold;transform:scaleX(1.0126);-webkit-text-stroke:1px #fff;">FINM</span>
<span class="t" style="left:2457.72px;top:156.80px;font-size:48px;color:#fff;font-weight:bold;transform:scaleX(0.8577);-webkit-text-stroke:1px #fff;">DELSLAB</span>
<svg style="left:2410px;top:150px" width="44" height="50" viewBox="0 0 44 50"><circle cx="21.9" cy="30" r="13.6" stroke="#fff" stroke-width="8.8" fill="none"/>
<rect x="14" y="2" width="15.8" height="33" rx="7.9" fill="#292929"/>
<rect x="16.9" y="4.4" width="10" height="28.2" rx="5" fill="#fff"/></svg>
<span class="t" style="left:2295.80px;top:207.90px;font-size:34.8px;color:#fff;">T</span>
<span class="t" style="left:2336.52px;top:207.90px;font-size:34.8px;color:#fff;">e</span>
<span class="t" style="left:2379.74px;top:207.90px;font-size:34.8px;color:#fff;">m</span>
<span class="t" style="left:2435.32px;top:207.90px;font-size:34.8px;color:#fff;">p</span>
<span class="t" style="left:2481.24px;top:207.90px;font-size:34.8px;color:#fff;">l</span>
<span class="t" style="left:2510.52px;top:207.90px;font-size:34.8px;color:#fff;">a</span>
<span class="t" style="left:2554.98px;top:207.90px;font-size:34.8px;color:#fff;">t</span>
<span class="t" style="left:2588.02px;top:207.90px;font-size:34.8px;color:#fff;">e</span>
<span class="t" style="left:2632.04px;top:207.90px;font-size:34.8px;color:#fff;">s</span>
<svg style="left:2850px;top:253px" width="16" height="10" viewBox="0 0 16 10"><path d="M1 1.2 L7.6 8 L14.2 1.2" stroke="#e6e6e6" stroke-width="1.7" fill="none"/></svg>
<div class="b" style="left:53px;top:305px;width:2807px;height:1365px;background:#fff;"></div>
<div class="b" style="left:53px;top:278px;width:35px;height:27px;background:#5e5e5e;"></div>
<span class="t g" style="left:63.02px;top:280.70px;font-size:23.2px;color:#fff;transform:scaleX(0.9700);">A</span>
<div class="b" style="left:87.5px;top:279px;width:1px;height:26px;background:#9a9a9a;"></div>
<span class="t g" style="left:104.68px;top:280.70px;font-size:23.2px;color:#ececec;transform:scaleX(0.9700);">B</span>
<div class="b" style="left:136.5px;top:279px;width:1px;height:26px;background:#4d4d4d;"></div>
<span class="t g" style="left:263.98px;top:280.70px;font-size:23.2px;color:#ececec;transform:scaleX(0.9700);">C</span>
<div class="b" style="left:407.0px;top:279px;width:1px;height:26px;background:#4d4d4d;"></div>
<span class="t g" style="left:534.00px;top:280.70px;font-size:23.2px;color:#ececec;transform:scaleX(0.9700);">D</span>
<div class="b" style="left:677.0px;top:279px;width:1px;height:26px;background:#4d4d4d;"></div>
<span class="t g" style="left:804.57px;top:280.70px;font-size:23.2px;color:#ececec;transform:scaleX(0.9700);">E</span>
<div class="b" style="left:947.0px;top:279px;width:1px;height:26px;background:#4d4d4d;"></div>
<span class="t g" style="left:1043.16px;top:280.70px;font-size:23.2px;color:#ececec;transform:scaleX(0.9700);">F</span>
<div class="b" style="left:1153.0px;top:279px;width:1px;height:26px;background:#4d4d4d;"></div>
<span class="t g" style="left:1248.00px;top:280.70px;font-size:23.2px;color:#ececec;transform:scaleX(0.9700);">G</span>
<div class="b" style="left:1359.0px;top:279px;width:1px;height:26px;background:#4d4d4d;"></div>
<span class="t g" style="left:1454.87px;top:280.70px;font-size:23.2px;color:#ececec;transform:scaleX(0.9700);">H</span>
<div class="b" style="left:1566.0px;top:279px;width:1px;height:26px;background:#4d4d4d;"></div>
<div class="b" style="left:1669.1px;top:284px;width:2.2px;height:16px;background:#ececec;"></div>
<div class="b" style="left:1666.8px;top:284px;width:6.8px;height:1.8px;background:#ececec;"></div>
<div class="b" style="left:1666.8px;top:298.2px;width:6.8px;height:1.8px;background:#ececec;"></div>
<div class="b" style="left:1773.0px;top:279px;width:1px;height:26px;background:#4d4d4d;"></div>
<span class="t g" style="left:1853.02px;top:280.70px;font-size:23.2px;color:#ececec;transform:scaleX(0.9700);">J</span>
<div class="b" style="left:1942.0px;top:279px;width:1px;height:26px;background:#4d4d4d;"></div>
<span class="t g" style="left:2018.70px;top:280.70px;font-size:23.2px;color:#ececec;transform:scaleX(0.9700);">K</span>
<div class="b" style="left:2111.0px;top:279px;width:1px;height:26px;background:#4d4d4d;"></div>
<span class="t g" style="left:2189.19px;top:280.70px;font-size:23.2px;color:#ececec;transform:scaleX(0.9700);">L</span>
<div class="b" style="left:2280.0px;top:279px;width:1px;height:26px;background:#4d4d4d;"></div>
<span class="t g" style="left:2355.63px;top:280.70px;font-size:23.2px;color:#ececec;transform:scaleX(0.9700);">M</span>
<div class="b" style="left:2449.0px;top:279px;width:1px;height:26px;background:#4d4d4d;"></div>
<span class="t g" style="left:2525.87px;top:280.70px;font-size:23.2px;color:#ececec;transform:scaleX(0.9700);">N</span>
<div class="b" style="left:2618.0px;top:279px;width:1px;height:26px;background:#4d4d4d;"></div>
<span class="t g" style="left:2694.28px;top:280.70px;font-size:23.2px;color:#ececec;transform:scaleX(0.9700);">O</span>
<div class="b" style="left:2787.0px;top:279px;width:1px;height:26px;background:#4d4d4d;"></div>
<div class="b" style="left:52.5px;top:279px;width:1px;height:26px;background:#9a9a9a;"></div>
<svg style="left:29px;top:282px" width="22" height="21" viewBox="0 0 22 21"><path d="M21 0.5 V20 H1 Z" fill="#6f6f6f"/></svg>
<div class="b" style="left:53px;top:303.6px;width:36px;height:2px;background:#1d7a45;"></div>
<div class="b" style="left:11px;top:305px;width:42px;height:50px;background:#646464;"></div>
<span class="t g" style="left:25.40px;top:329.85px;font-size:22.9px;color:#fff;transform:scaleX(0.9900);">1</span>
<div class="b" style="left:11px;top:354.5px;width:42px;height:1px;background:#bdbdbd;"></div>
<span class="t g" style="left:25.68px;top:370.85px;font-size:22.9px;color:#ececec;transform:scaleX(0.9900);">2</span>
<div class="b" style="left:11px;top:395.5px;width:42px;height:1px;background:#3e3e3e;"></div>
<span class="t g" style="left:25.77px;top:398.85px;font-size:22.9px;color:#ececec;transform:scaleX(0.9900);">3</span>
<div class="b" style="left:11px;top:423.5px;width:42px;height:1px;background:#3e3e3e;"></div>
<span class="t g" style="left:25.77px;top:430.85px;font-size:22.9px;color:#ececec;transform:scaleX(0.9900);">4</span>
<div class="b" style="left:11px;top:455.5px;width:42px;height:1px;background:#3e3e3e;"></div>
<span class="t g" style="left:25.62px;top:460.85px;font-size:22.9px;color:#ececec;transform:scaleX(0.9900);">6</span>
<div class="b" style="left:11px;top:485.5px;width:42px;height:1px;background:#3e3e3e;"></div>
<span class="t g" style="left:25.68px;top:488.85px;font-size:22.9px;color:#ececec;transform:scaleX(0.9900);">7</span>
<div class="b" style="left:11px;top:513.5px;width:42px;height:1px;background:#3e3e3e;"></div>
<span class="t g" style="left:19.05px;top:516.85px;font-size:22.9px;color:#ececec;transform:scaleX(0.9900);">13</span>
<div class="b" style="left:11px;top:541.5px;width:42px;height:1px;background:#3e3e3e;"></div>
<span class="t g" style="left:18.88px;top:565.85px;font-size:22.9px;color:#ececec;transform:scaleX(0.9900);">14</span>
<div class="b" style="left:11px;top:590.5px;width:42px;height:1px;background:#3e3e3e;"></div>
<span class="t g" style="left:19.02px;top:591.85px;font-size:22.9px;color:#ececec;transform:scaleX(0.9900);">15</span>
<div class="b" style="left:11px;top:616.5px;width:42px;height:1px;background:#3e3e3e;"></div>
<span class="t g" style="left:19.05px;top:626.85px;font-size:22.9px;color:#ececec;transform:scaleX(0.9900);">16</span>
<div class="b" style="left:11px;top:651.5px;width:42px;height:1px;background:#3e3e3e;"></div>
<span class="t g" style="left:19.11px;top:654.85px;font-size:22.9px;color:#ececec;transform:scaleX(0.9900);">17</span>
<div class="b" style="left:11px;top:679.5px;width:42px;height:1px;background:#3e3e3e;"></div>
<span class="t g" style="left:19.02px;top:682.85px;font-size:22.9px;color:#ececec;transform:scaleX(0.9900);">18</span>
<div class="b" style="left:11px;top:707.5px;width:42px;height:1px;background:#3e3e3e;"></div>
<span class="t g" style="left:19.08px;top:710.85px;font-size:22.9px;color:#ececec;transform:scaleX(0.9900);">19</span>
<div class="b" style="left:11px;top:735.5px;width:42px;height:1px;background:#3e3e3e;"></div>
<span class="t g" style="left:19.28px;top:738.85px;font-size:22.9px;color:#ececec;transform:scaleX(0.9900);">20</span>
<div class="b" style="left:11px;top:763.5px;width:42px;height:1px;background:#3e3e3e;"></div>
<span class="t g" style="left:19.39px;top:766.85px;font-size:22.9px;color:#ececec;transform:scaleX(0.9900);">21</span>
<div class="b" style="left:11px;top:791.5px;width:42px;height:1px;background:#3e3e3e;"></div>
<span class="t g" style="left:19.39px;top:794.85px;font-size:22.9px;color:#ececec;transform:scaleX(0.9900);">22</span>
<div class="b" style="left:11px;top:819.5px;width:42px;height:1px;background:#3e3e3e;"></div>
<span class="t g" style="left:19.33px;top:822.85px;font-size:22.9px;color:#ececec;transform:scaleX(0.9900);">23</span>
<div class="b" style="left:11px;top:847.5px;width:42px;height:1px;background:#3e3e3e;"></div>
<span class="t g" style="left:19.16px;top:850.85px;font-size:22.9px;color:#ececec;transform:scaleX(0.9900);">24</span>
<div class="b" style="left:11px;top:875.5px;width:42px;height:1px;background:#3e3e3e;"></div>
<span class="t g" style="left:19.30px;top:878.85px;font-size:22.9px;color:#ececec;transform:scaleX(0.9900);">25</span>
<div class="b" style="left:11px;top:903.5px;width:42px;height:1px;background:#3e3e3e;"></div>
<span class="t g" style="left:19.33px;top:906.85px;font-size:22.9px;color:#ececec;transform:scaleX(0.9900);">26</span>
<div class="b" style="left:11px;top:931.5px;width:42px;height:1px;background:#3e3e3e;"></div>
<span class="t g" style="left:19.39px;top:934.85px;font-size:22.9px;color:#ececec;transform:scaleX(0.9900);">27</span>
<div class="b" style="left:11px;top:959.5px;width:42px;height:1px;background:#3e3e3e;"></div>
<span class="t g" style="left:19.30px;top:962.85px;font-size:22.9px;color:#ececec;transform:scaleX(0.9900);">28</span>
<div class="b" style="left:11px;top:987.5px;width:42px;height:1px;background:#3e3e3e;"></div>
<span class="t g" style="left:19.36px;top:990.85px;font-size:22.9px;color:#ececec;transform:scaleX(0.9900);">29</span>
<div class="b" style="left:11px;top:1015.5px;width:42px;height:1px;background:#3e3e3e;"></div>
<span class="t g" style="left:19.42px;top:1018.85px;font-size:22.9px;color:#ececec;transform:scaleX(0.9900);">30</span>
<div class="b" style="left:11px;top:1043.5px;width:42px;height:1px;background:#3e3e3e;"></div>
<span class="t g" style="left:19.53px;top:1046.85px;font-size:22.9px;color:#ececec;transform:scaleX(0.9900);">31</span>
<div class="b" style="left:11px;top:1071.5px;width:42px;height:1px;background:#3e3e3e;"></div>
<span class="t g" style="left:19.53px;top:1074.85px;font-size:22.9px;color:#ececec;transform:scaleX(0.9900);">32</span>
<div class="b" style="left:11px;top:1099.5px;width:42px;height:1px;background:#3e3e3e;"></div>
<span class="t g" style="left:19.47px;top:1102.85px;font-size:22.9px;color:#ececec;transform:scaleX(0.9900);">33</span>
<div class="b" style="left:11px;top:1127.5px;width:42px;height:1px;background:#3e3e3e;"></div>
<span class="t g" style="left:19.30px;top:1130.85px;font-size:22.9px;color:#ececec;transform:scaleX(0.9900);">34</span>
<div class="b" style="left:11px;top:1155.5px;width:42px;height:1px;background:#3e3e3e;"></div>
<span class="t g" style="left:19.45px;top:1158.85px;font-size:22.9px;color:#ececec;transform:scaleX(0.9900);">35</span>
<div class="b" style="left:11px;top:1183.5px;width:42px;height:1px;background:#3e3e3e;"></div>
<span class="t g" style="left:19.47px;top:1186.85px;font-size:22.9px;color:#ececec;transform:scaleX(0.9900);">36</span>
<div class="b" style="left:11px;top:1211.5px;width:42px;height:1px;background:#3e3e3e;"></div>
<span class="t g" style="left:19.53px;top:1221.85px;font-size:22.9px;color:#ececec;transform:scaleX(0.9900);">37</span>
<div class="b" style="left:11px;top:1246.5px;width:42px;height:1px;background:#3e3e3e;"></div>
<span class="t g" style="left:19.45px;top:1249.85px;font-size:22.9px;color:#ececec;transform:scaleX(0.9900);">38</span>
<div class="b" style="left:11px;top:1274.5px;width:42px;height:1px;background:#3e3e3e;"></div>
<span class="t g" style="left:19.50px;top:1277.85px;font-size:22.9px;color:#ececec;transform:scaleX(0.9900);">39</span>
<div class="b" style="left:11px;top:1302.5px;width:42px;height:1px;background:#3e3e3e;"></div>
<span class="t g" style="left:19.59px;top:1319.85px;font-size:22.9px;color:#ececec;transform:scaleX(0.9900);">40</span>
<div class="b" style="left:11px;top:1344.5px;width:42px;height:1px;background:#3e3e3e;"></div>
<span class="t g" style="left:19.70px;top:1347.85px;font-size:22.9px;color:#ececec;transform:scaleX(0.9900);">41</span>
<div class="b" style="left:11px;top:1372.5px;width:42px;height:1px;background:#3e3e3e;"></div>
<span class="t g" style="left:19.70px;top:1375.85px;font-size:22.9px;color:#ececec;transform:scaleX(0.9900);">42</span>
<div class="b" style="left:11px;top:1400.5px;width:42px;height:1px;background:#3e3e3e;"></div>
<span class="t g" style="left:19.64px;top:1403.85px;font-size:22.9px;color:#ececec;transform:scaleX(0.9900);">43</span>
<div class="b" style="left:11px;top:1428.5px;width:42px;height:1px;background:#3e3e3e;"></div>
<span class="t g" style="left:19.47px;top:1431.85px;font-size:22.9px;color:#ececec;transform:scaleX(0.9900);">44</span>
<div class="b" style="left:11px;top:1456.5px;width:42px;height:1px;background:#3e3e3e;"></div>
<span class="t g" style="left:19.62px;top:1459.85px;font-size:22.9px;color:#ececec;transform:scaleX(0.9900);">45</span>
<div class="b" style="left:11px;top:1484.5px;width:42px;height:1px;background:#3e3e3e;"></div>
<span class="t g" style="left:19.64px;top:1501.85px;font-size:22.9px;color:#ececec;transform:scaleX(0.9900);">46</span>
<div class="b" style="left:11px;top:1526.5px;width:42px;height:1px;background:#3e3e3e;"></div>
<span class="t g" style="left:19.70px;top:1529.85px;font-size:22.9px;color:#ececec;transform:scaleX(0.9900);">47</span>
<div class="b" style="left:11px;top:1554.5px;width:42px;height:1px;background:#3e3e3e;"></div>
<span class="t g" style="left:19.62px;top:1557.85px;font-size:22.9px;color:#ececec;transform:scaleX(0.9900);">48</span>
<div class="b" style="left:11px;top:1582.5px;width:42px;height:1px;background:#3e3e3e;"></div>
<span class="t g" style="left:19.67px;top:1585.85px;font-size:22.9px;color:#ececec;transform:scaleX(0.9900);">49</span>
<div class="b" style="left:11px;top:1610.5px;width:42px;height:1px;background:#3e3e3e;"></div>
<span class="t g" style="left:19.39px;top:1627.85px;font-size:22.9px;color:#ececec;transform:scaleX(0.9900);">50</span>
<div class="b" style="left:11px;top:1652.5px;width:42px;height:1px;background:#3e3e3e;"></div>
<div class="b" style="left:11px;top:304.5px;width:42px;height:1px;background:#bdbdbd;"></div>
<div class="b" style="left:11px;top:459.3px;width:42px;height:1px;background:#3e3e3e;"></div>
<div class="b" style="left:11px;top:515.3px;width:42px;height:1px;background:#3e3e3e;"></div>
<div class="b" style="left:52px;top:305px;width:2px;height:50px;background:#1d7a45;"></div>
<div class="b" style="left:138px;top:617px;width:1635.5px;height:33px;background:#6b73e8;"></div>
<div class="b" style="left:946.5px;top:617px;width:1.6px;height:33px;background:#fff;"></div>
<div class="b" style="left:1152.5px;top:617px;width:1.6px;height:33px;background:#fff;"></div>
<div class="b" style="left:1359.0px;top:617px;width:1.6px;height:33px;background:#fff;"></div>
<div class="b" style="left:1565.5px;top:617px;width:1.6px;height:33px;background:#fff;"></div>
<div class="b" style="left:139px;top:653px;width:1632.6px;height:559px;background:#fff16c;"></div>
<div class="b" style="left:139px;top:680px;width:1632.6px;height:1px;background:#fffbc8;"></div>
<div class="b" style="left:139px;top:708px;width:1632.6px;height:1px;background:#fffbc8;"></div>
<div class="b" style="left:139px;top:736px;width:1632.6px;height:1px;background:#fffbc8;"></div>
<div class="b" style="left:139px;top:764px;width:1632.6px;height:1px;background:#fffbc8;"></div>
<div class="b" style="left:139px;top:792px;width:1632.6px;height:1px;background:#fffbc8;"></div>
<div class="b" style="left:139px;top:820px;width:1632.6px;height:1px;background:#fffbc8;"></div>
<div class="b" style="left:139px;top:848px;width:1632.6px;height:1px;background:#fffbc8;"></div>
<div class="b" style="left:139px;top:876px;width:1632.6px;height:1px;background:#fffbc8;"></div>
<div class="b" style="left:139px;top:904px;width:1632.6px;height:1px;background:#fffbc8;"></div>
<div class="b" style="left:139px;top:932px;width:1632.6px;height:1px;background:#fffbc8;"></div>
<div class="b" style="left:139px;top:960px;width:1632.6px;height:1px;background:#fffbc8;"></div>
<div class="b" style="left:139px;top:988px;width:1632.6px;height:1px;background:#fffbc8;"></div>
<div class="b" style="left:139px;top:1016px;width:1632.6px;height:1px;background:#fffbc8;"></div>
<div class="b" style="left:139px;top:1044px;width:1632.6px;height:1px;background:#fffbc8;"></div>
<div class="b" style="left:139px;top:1072px;width:1632.6px;height:1px;background:#fffbc8;"></div>
<div class="b" style="left:139px;top:1100px;width:1632.6px;height:1px;background:#fffbc8;"></div>
<div class="b" style="left:139px;top:1128px;width:1632.6px;height:1px;background:#fffbc8;"></div>
<div class="b" style="left:139px;top:1156px;width:1632.6px;height:1px;background:#fffbc8;"></div>
<div class="b" style="left:139px;top:1184px;width:1632.6px;height:1px;background:#fffbc8;"></div>
<div class="b" style="left:945.7px;top:650px;width:3px;height:562px;background:#fff;"></div>
<div class="b" style="left:1151.7px;top:650px;width:3px;height:562px;background:#fff;"></div>
<div class="b" style="left:1358.2px;top:650px;width:3px;height:562px;background:#fff;"></div>
<div class="b" style="left:1564.7px;top:650px;width:3px;height:562px;background:#fff;"></div>
<div class="b" style="left:137px;top:1212.2px;width:2723px;height:35.6px;background:#4ab2e8;"></div>
<div class="b" style="left:137px;top:1373.1px;width:2723px;height:27.700000000000045px;background:#4ab2e8;"></div>
<div class="b" style="left:137px;top:1457.2px;width:2723px;height:28.59999999999991px;background:#4ab2e8;"></div>
<div class="b" style="left:137px;top:1527.5px;width:2723px;height:28.09999999999991px;background:#4ab2e8;"></div>
<div class="b" style="left:137px;top:1583.3px;width:2723px;height:28.299999999999955px;background:#4ab2e8;"></div>
<div class="b" style="left:1773px;top:305px;width:1px;height:1365px;background:#999;"></div>
<div class="b" style="left:1773px;top:1212px;width:1px;height:36px;background:#6aa9c8;"></div>
<div class="b" style="left:1773px;top:1373px;width:1px;height:28px;background:#6aa9c8;"></div>
<div class="b" style="left:1773px;top:1457px;width:1px;height:28px;background:#6aa9c8;"></div>
<div class="b" style="left:1773px;top:1527px;width:1px;height:28px;background:#6aa9c8;"></div>
<div class="b" style="left:1773px;top:1583px;width:1px;height:28px;background:#6aa9c8;"></div>
<div class="b" style="left:53px;top:514px;width:2807px;height:1px;background:#9c9c9c;"></div>
<span class="t g" style="left:95.42px;top:312.40px;font-size:38.8px;color:#222;font-weight:bold;-webkit-text-stroke:0.7px #222;transform:scaleX(1.0367);">Startup Costs (CAPEX)</span>
<span class="t g" style="left:93.75px;top:360.40px;font-size:33.8px;color:#000;font-weight:bold;-webkit-text-stroke:0.6px #000;transform:scaleX(1.0365);">ABC Company Inc.</span>
<span class="t g" style="left:92.23px;top:401.50px;font-size:19.6px;color:#2a7bea;font-weight:bold;-webkit-text-stroke:0.3px #2a7bea;transform:scaleX(1.1705);">Go to Table of Contents</span>
<div class="b" style="left:92.3px;top:420px;width:258px;height:1.8px;background:#2a7bea;"></div>
<span class="t g" style="left:92.17px;top:462.65px;font-size:22.3px;color:#000;font-weight:bold;-webkit-text-stroke:0.35px #000;transform:scaleX(1.0313);">Fiscal Year</span>
<span class="t g" style="left:92.12px;top:490.65px;font-size:22.3px;color:#000;font-weight:bold;-webkit-text-stroke:0.35px #000;transform:scaleX(1.0702);">Month</span>
<span class="t g" style="left:95.42px;top:550.40px;font-size:38.8px;color:#222;font-weight:bold;-webkit-text-stroke:0.7px #222;transform:scaleX(1.0432);">Startup Costs, $</span>
<span class="t g" style="left:95.41px;top:1308.40px;font-size:38.8px;color:#222;font-weight:bold;-webkit-text-stroke:0.7px #222;transform:scaleX(1.0526);">Startup Costs Depreciation, $</span>
<span class="t g" style="left:1713.69px;top:462.85px;font-size:21.9px;color:#000;font-weight:bold;-webkit-text-stroke:0.35px #000;transform:scaleX(1.1244);">2025</span>
<span class="t g" style="left:1688.50px;top:490.65px;font-size:22.3px;color:#000;font-weight:bold;-webkit-text-stroke:0.35px #000;transform:scaleX(1.0936);">Dec-25</span>
<span class="t g" style="left:1882.69px;top:462.85px;font-size:21.9px;color:#000;font-weight:bold;-webkit-text-stroke:0.35px #000;transform:scaleX(1.1283);">2026</span>
<span class="t g" style="left:1862.82px;top:490.65px;font-size:22.3px;color:#000;font-weight:bold;-webkit-text-stroke:0.35px #000;transform:scaleX(1.0587);">Jan-26</span>
<span class="t g" style="left:2051.69px;top:462.85px;font-size:21.9px;color:#000;font-weight:bold;-webkit-text-stroke:0.35px #000;transform:scaleX(1.1283);">2026</span>
<span class="t g" style="left:2027.49px;top:490.65px;font-size:22.3px;color:#000;font-weight:bold;-webkit-text-stroke:0.35px #000;transform:scaleX(1.1010);">Feb-26</span>
<span class="t g" style="left:2220.69px;top:462.85px;font-size:21.9px;color:#000;font-weight:bold;-webkit-text-stroke:0.35px #000;transform:scaleX(1.1283);">2026</span>
<span class="t g" style="left:2194.46px;top:490.65px;font-size:22.3px;color:#000;font-weight:bold;-webkit-text-stroke:0.35px #000;transform:scaleX(1.1295);">Mar-26</span>
<span class="t g" style="left:2389.69px;top:462.85px;font-size:21.9px;color:#000;font-weight:bold;-webkit-text-stroke:0.35px #000;transform:scaleX(1.1283);">2026</span>
<span class="t g" style="left:2367.97px;top:490.65px;font-size:22.3px;color:#000;font-weight:bold;-webkit-text-stroke:0.35px #000;transform:scaleX(1.0849);">Apr-26</span>
<span class="t g" style="left:2558.69px;top:462.85px;font-size:21.9px;color:#000;font-weight:bold;-webkit-text-stroke:0.35px #000;transform:scaleX(1.1283);">2026</span>
<span class="t g" style="left:2529.48px;top:490.65px;font-size:22.3px;color:#000;font-weight:bold;-webkit-text-stroke:0.35px #000;transform:scaleX(1.1130);">May-26</span>
<span class="t g" style="left:2727.69px;top:462.85px;font-size:21.9px;color:#000;font-weight:bold;-webkit-text-stroke:0.35px #000;transform:scaleX(1.1283);">2026</span>
<span class="t g" style="left:2706.22px;top:490.65px;font-size:22.3px;color:#000;font-weight:bold;-webkit-text-stroke:0.35px #000;transform:scaleX(1.0629);">Jun-26</span>
<span class="t g" style="left:482.69px;top:623.65px;font-size:22.3px;color:#fff;font-weight:bold;-webkit-text-stroke:0.35px #fff;transform:scaleX(1.0332);">Categories</span>
<span class="t g" style="left:982.52px;top:623.65px;font-size:22.3px;color:#fff;font-weight:bold;-webkit-text-stroke:0.35px #fff;transform:scaleX(1.0299);">Launch date</span>
<span class="t g" style="left:1207.16px;top:623.65px;font-size:22.3px;color:#fff;font-weight:bold;-webkit-text-stroke:0.35px #fff;transform:scaleX(1.0401);">End date</span>
<span class="t g" style="left:1397.73px;top:623.65px;font-size:22.3px;color:#fff;font-weight:bold;-webkit-text-stroke:0.35px #fff;transform:scaleX(1.0306);">Spending, $</span>
<span class="t g" style="left:1596.68px;top:623.65px;font-size:22.3px;color:#fff;font-weight:bold;-webkit-text-stroke:0.35px #fff;transform:scaleX(1.0433);">Amortizable?</span>
<span class="t g" style="left:140.41px;top:654.70px;font-size:23.2px;color:#080808;transform:scaleX(0.9467);">Office Furniture &amp; Equipment</span>
<span class="t g" style="left:1017.83px;top:654.70px;font-size:23.2px;color:#080808;transform:scaleX(0.9210);">Jan-26</span>
<span class="t g" style="left:1220.46px;top:654.70px;font-size:23.2px;color:#080808;transform:scaleX(0.9668);">Mar-26</span>
<span class="t g" style="left:1487.22px;top:654.85px;font-size:22.9px;color:#080808;transform:scaleX(0.9700);">15,000</span>
<span class="t g" style="left:1653.22px;top:654.70px;font-size:23.2px;color:#080808;transform:scaleX(0.9208);">Yes</span>
<span class="t g" style="left:1875.54px;top:654.85px;font-size:22.9px;color:#080808;transform:scaleX(0.9700);">5,000</span>
<span class="t g" style="left:2044.54px;top:654.85px;font-size:22.9px;color:#080808;transform:scaleX(0.9700);">5,000</span>
<span class="t g" style="left:2213.54px;top:654.85px;font-size:22.9px;color:#080808;transform:scaleX(0.9700);">5,000</span>
<span class="t g" style="left:2405.84px;top:654.85px;font-size:22.9px;color:#080808;transform:scaleX(1.0939);">-</span>
<span class="t g" style="left:2574.84px;top:654.85px;font-size:22.9px;color:#080808;transform:scaleX(1.0939);">-</span>
<span class="t g" style="left:2743.84px;top:654.85px;font-size:22.9px;color:#080808;transform:scaleX(1.0939);">-</span>
<span class="t g" style="left:140.31px;top:682.70px;font-size:23.2px;color:#080808;transform:scaleX(0.9415);">Computer Hardware &amp; Software Licenses</span>
<span class="t g" style="left:1017.83px;top:682.70px;font-size:23.2px;color:#080808;transform:scaleX(0.9210);">Jan-26</span>
<span class="t g" style="left:1223.90px;top:682.70px;font-size:23.2px;color:#080808;transform:scaleX(0.9473);">Apr-26</span>
<span class="t g" style="left:1487.22px;top:682.85px;font-size:22.9px;color:#080808;transform:scaleX(0.9700);">10,000</span>
<span class="t g" style="left:1653.22px;top:682.70px;font-size:23.2px;color:#080808;transform:scaleX(0.9208);">Yes</span>
<span class="t g" style="left:1875.54px;top:682.85px;font-size:22.9px;color:#080808;transform:scaleX(0.9700);">2,500</span>
<span class="t g" style="left:2044.54px;top:682.85px;font-size:22.9px;color:#080808;transform:scaleX(0.9700);">2,500</span>
<span class="t g" style="left:2213.54px;top:682.85px;font-size:22.9px;color:#080808;transform:scaleX(0.9700);">2,500</span>
<span class="t g" style="left:2382.54px;top:682.85px;font-size:22.9px;color:#080808;transform:scaleX(0.9700);">2,500</span>
<span class="t g" style="left:2574.84px;top:682.85px;font-size:22.9px;color:#080808;transform:scaleX(1.0939);">-</span>
<span class="t g" style="left:2743.84px;top:682.85px;font-size:22.9px;color:#080808;transform:scaleX(1.0939);">-</span>
<span class="t g" style="left:139.61px;top:710.70px;font-size:23.2px;color:#080808;transform:scaleX(0.9658);">Network Infrastructure Setup</span>
<span class="t g" style="left:1015.20px;top:710.70px;font-size:23.2px;color:#080808;transform:scaleX(0.9413);">Feb-26</span>
<span class="t g" style="left:1219.13px;top:710.70px;font-size:23.2px;color:#080808;transform:scaleX(0.9534);">May-26</span>
<span class="t g" style="left:1499.54px;top:710.85px;font-size:22.9px;color:#080808;transform:scaleX(0.9700);">5,000</span>
<span class="t g" style="left:1653.22px;top:710.70px;font-size:23.2px;color:#080808;transform:scaleX(0.9208);">Yes</span>
<span class="t g" style="left:1898.84px;top:710.85px;font-size:22.9px;color:#080808;transform:scaleX(1.0939);">-</span>
<span class="t g" style="left:2044.54px;top:710.85px;font-size:22.9px;color:#080808;transform:scaleX(0.9700);">1,250</span>
<span class="t g" style="left:2213.54px;top:710.85px;font-size:22.9px;color:#080808;transform:scaleX(0.9700);">1,250</span>
<span class="t g" style="left:2382.54px;top:710.85px;font-size:22.9px;color:#080808;transform:scaleX(0.9700);">1,250</span>
<span class="t g" style="left:2551.54px;top:710.85px;font-size:22.9px;color:#080808;transform:scaleX(0.9700);">1,250</span>
<span class="t g" style="left:2743.84px;top:710.85px;font-size:22.9px;color:#080808;transform:scaleX(1.0939);">-</span>
<span class="t g" style="left:141.34px;top:738.70px;font-size:23.2px;color:#080808;transform:scaleX(0.9546);">Website Development (initial)</span>
<span class="t g" style="left:1014.26px;top:738.70px;font-size:23.2px;color:#080808;transform:scaleX(0.9668);">Mar-26</span>
<span class="t g" style="left:1223.47px;top:738.70px;font-size:23.2px;color:#080808;transform:scaleX(0.9368);">Jun-26</span>
<span class="t g" style="left:1499.54px;top:738.85px;font-size:22.9px;color:#080808;transform:scaleX(0.9700);">8,000</span>
<span class="t g" style="left:1653.22px;top:738.70px;font-size:23.2px;color:#080808;transform:scaleX(0.9208);">Yes</span>
<span class="t g" style="left:1898.84px;top:738.85px;font-size:22.9px;color:#080808;transform:scaleX(1.0939);">-</span>
<span class="t g" style="left:2067.84px;top:738.85px;font-size:22.9px;color:#080808;transform:scaleX(1.0939);">-</span>
<span class="t g" style="left:2213.54px;top:738.85px;font-size:22.9px;color:#080808;transform:scaleX(0.9700);">2,000</span>
<span class="t g" style="left:2382.54px;top:738.85px;font-size:22.9px;color:#080808;transform:scaleX(0.9700);">2,000</span>
<span class="t g" style="left:2551.54px;top:738.85px;font-size:22.9px;color:#080808;transform:scaleX(0.9700);">2,000</span>
<span class="t g" style="left:2720.54px;top:738.85px;font-size:22.9px;color:#080808;transform:scaleX(0.9700);">2,000</span>
<span class="t g" style="left:140.32px;top:766.70px;font-size:23.2px;color:#080808;transform:scaleX(0.9346);">CRM System Implementation</span>
<span class="t g" style="left:1017.70px;top:766.70px;font-size:23.2px;color:#080808;transform:scaleX(0.9473);">Apr-26</span>
<span class="t g" style="left:1227.07px;top:766.70px;font-size:23.2px;color:#080808;transform:scaleX(0.9381);">Jul-26</span>
<span class="t g" style="left:1499.54px;top:766.85px;font-size:22.9px;color:#080808;transform:scaleX(0.9700);">7,000</span>
<span class="t g" style="left:1653.22px;top:766.70px;font-size:23.2px;color:#080808;transform:scaleX(0.9208);">Yes</span>
<span class="t g" style="left:1898.84px;top:766.85px;font-size:22.9px;color:#080808;transform:scaleX(1.0939);">-</span>
<span class="t g" style="left:2067.84px;top:766.85px;font-size:22.9px;color:#080808;transform:scaleX(1.0939);">-</span>
<span class="t g" style="left:2236.84px;top:766.85px;font-size:22.9px;color:#080808;transform:scaleX(1.0939);">-</span>
<span class="t g" style="left:2382.54px;top:766.85px;font-size:22.9px;color:#080808;transform:scaleX(0.9700);">1,750</span>
<span class="t g" style="left:2551.54px;top:766.85px;font-size:22.9px;color:#080808;transform:scaleX(0.9700);">1,750</span>
<span class="t g" style="left:2720.54px;top:766.85px;font-size:22.9px;color:#080808;transform:scaleX(0.9700);">1,750</span>
<span class="t g" style="left:140.41px;top:794.70px;font-size:23.2px;color:#080808;transform:scaleX(0.9470);">Security System Installation</span>
<span class="t g" style="left:1012.93px;top:794.70px;font-size:23.2px;color:#080808;transform:scaleX(0.9534);">May-26</span>
<span class="t g" style="left:1222.15px;top:794.70px;font-size:23.2px;color:#080808;transform:scaleX(0.9285);">Aug-26</span>
<span class="t g" style="left:1499.54px;top:794.85px;font-size:22.9px;color:#080808;transform:scaleX(0.9700);">3,000</span>
<span class="t g" style="left:1653.22px;top:794.70px;font-size:23.2px;color:#080808;transform:scaleX(0.9208);">Yes</span>
<span class="t g" style="left:1898.84px;top:794.85px;font-size:22.9px;color:#080808;transform:scaleX(1.0939);">-</span>
<span class="t g" style="left:2067.84px;top:794.85px;font-size:22.9px;color:#080808;transform:scaleX(1.0939);">-</span>
<span class="t g" style="left:2236.84px;top:794.85px;font-size:22.9px;color:#080808;transform:scaleX(1.0939);">-</span>
<span class="t g" style="left:2405.84px;top:794.85px;font-size:22.9px;color:#080808;transform:scaleX(1.0939);">-</span>
<span class="t g" style="left:2570.09px;top:794.85px;font-size:22.9px;color:#080808;transform:scaleX(0.9700);">750</span>
<span class="t g" style="left:2739.09px;top:794.85px;font-size:22.9px;color:#080808;transform:scaleX(0.9700);">750</span>
<span class="t g" style="left:139.40px;top:822.70px;font-size:23.2px;color:#080808;transform:scaleX(0.9561);">Initial Marketing Collateral Design</span>
<span class="t g" style="left:1017.27px;top:822.70px;font-size:23.2px;color:#080808;transform:scaleX(0.9368);">Jun-26</span>
<span class="t g" style="left:1222.20px;top:822.70px;font-size:23.2px;color:#080808;transform:scaleX(0.9143);">Sep-26</span>
<span class="t g" style="left:1499.54px;top:822.85px;font-size:22.9px;color:#080808;transform:scaleX(0.9700);">2,000</span>
<span class="t g" style="left:1653.22px;top:822.70px;font-size:23.2px;color:#080808;transform:scaleX(0.9208);">Yes</span>
<span class="t g" style="left:1898.84px;top:822.85px;font-size:22.9px;color:#080808;transform:scaleX(1.0939);">-</span>
<span class="t g" style="left:2067.84px;top:822.85px;font-size:22.9px;color:#080808;transform:scaleX(1.0939);">-</span>
<span class="t g" style="left:2236.84px;top:822.85px;font-size:22.9px;color:#080808;transform:scaleX(1.0939);">-</span>
<span class="t g" style="left:2405.84px;top:822.85px;font-size:22.9px;color:#080808;transform:scaleX(1.0939);">-</span>
<span class="t g" style="left:2574.84px;top:822.85px;font-size:22.9px;color:#080808;transform:scaleX(1.0939);">-</span>
<span class="t g" style="left:2739.09px;top:822.85px;font-size:22.9px;color:#080808;transform:scaleX(0.9700);">500</span>
<span class="t g" style="left:139.68px;top:850.70px;font-size:23.2px;color:#080808;transform:scaleX(0.9286);">Legal Entity Setup Fees</span>
<span class="t g" style="left:1017.83px;top:850.70px;font-size:23.2px;color:#080808;transform:scaleX(0.9210);">Jan-26</span>
<span class="t g" style="left:1221.40px;top:850.70px;font-size:23.2px;color:#080808;transform:scaleX(0.9413);">Feb-26</span>
<span class="t g" style="left:1499.54px;top:850.85px;font-size:22.9px;color:#080808;transform:scaleX(0.9700);">1,500</span>
<span class="t g" style="left:1653.22px;top:850.70px;font-size:23.2px;color:#080808;transform:scaleX(0.9208);">Yes</span>
<span class="t g" style="left:1894.09px;top:850.85px;font-size:22.9px;color:#080808;transform:scaleX(0.9700);">750</span>
<span class="t g" style="left:2063.09px;top:850.85px;font-size:22.9px;color:#080808;transform:scaleX(0.9700);">750</span>
<span class="t g" style="left:2236.84px;top:850.85px;font-size:22.9px;color:#080808;transform:scaleX(1.0939);">-</span>
<span class="t g" style="left:2405.84px;top:850.85px;font-size:22.9px;color:#080808;transform:scaleX(1.0939);">-</span>
<span class="t g" style="left:2574.84px;top:850.85px;font-size:22.9px;color:#080808;transform:scaleX(1.0939);">-</span>
<span class="t g" style="left:2743.84px;top:850.85px;font-size:22.9px;color:#080808;transform:scaleX(1.0939);">-</span>
<span class="t g" style="left:139.65px;top:878.70px;font-size:23.2px;color:#080808;transform:scaleX(0.9429);">Branding &amp; Logo Design</span>
<span class="t g" style="left:1015.20px;top:878.70px;font-size:23.2px;color:#080808;transform:scaleX(0.9413);">Feb-26</span>
<span class="t g" style="left:1220.46px;top:878.70px;font-size:23.2px;color:#080808;transform:scaleX(0.9668);">Mar-26</span>
<span class="t g" style="left:1499.54px;top:878.85px;font-size:22.9px;color:#080808;transform:scaleX(0.9700);">2,500</span>
<span class="t g" style="left:1653.22px;top:878.70px;font-size:23.2px;color:#080808;transform:scaleX(0.9208);">Yes</span>
<span class="t g" style="left:1898.84px;top:878.85px;font-size:22.9px;color:#080808;transform:scaleX(1.0939);">-</span>
<span class="t g" style="left:2044.54px;top:878.85px;font-size:22.9px;color:#080808;transform:scaleX(0.9700);">1,250</span>
<span class="t g" style="left:2213.54px;top:878.85px;font-size:22.9px;color:#080808;transform:scaleX(0.9700);">1,250</span>
<span class="t g" style="left:2405.84px;top:878.85px;font-size:22.9px;color:#080808;transform:scaleX(1.0939);">-</span>
<span class="t g" style="left:2574.84px;top:878.85px;font-size:22.9px;color:#080808;transform:scaleX(1.0939);">-</span>
<span class="t g" style="left:2743.84px;top:878.85px;font-size:22.9px;color:#080808;transform:scaleX(1.0939);">-</span>
<span class="t g" style="left:140.94px;top:906.70px;font-size:23.2px;color:#080808;transform:scaleX(1.0798);">-</span>
<span class="t g" style="left:1653.22px;top:906.70px;font-size:23.2px;color:#080808;transform:scaleX(0.9208);">Yes</span>
<span class="t g" style="left:1898.84px;top:906.85px;font-size:22.9px;color:#080808;transform:scaleX(1.0939);">-</span>
<span class="t g" style="left:2067.84px;top:906.85px;font-size:22.9px;color:#080808;transform:scaleX(1.0939);">-</span>
<span class="t g" style="left:2236.84px;top:906.85px;font-size:22.9px;color:#080808;transform:scaleX(1.0939);">-</span>
<span class="t g" style="left:2405.84px;top:906.85px;font-size:22.9px;color:#080808;transform:scaleX(1.0939);">-</span>
<span class="t g" style="left:2574.84px;top:906.85px;font-size:22.9px;color:#080808;transform:scaleX(1.0939);">-</span>
<span class="t g" style="left:2743.84px;top:906.85px;font-size:22.9px;color:#080808;transform:scaleX(1.0939);">-</span>
<span class="t g" style="left:140.94px;top:934.70px;font-size:23.2px;color:#080808;transform:scaleX(1.0798);">-</span>
<span class="t g" style="left:1653.22px;top:934.70px;font-size:23.2px;color:#080808;transform:scaleX(0.9208);">Yes</span>
<span class="t g" style="left:1898.84px;top:934.85px;font-size:22.9px;color:#080808;transform:scaleX(1.0939);">-</span>
<span class="t g" style="left:2067.84px;top:934.85px;font-size:22.9px;color:#080808;transform:scaleX(1.0939);">-</span>
<span class="t g" style="left:2236.84px;top:934.85px;font-size:22.9px;color:#080808;transform:scaleX(1.0939);">-</span>
<span class="t g" style="left:2405.84px;top:934.85px;font-size:22.9px;color:#080808;transform:scaleX(1.0939);">-</span>
<span class="t g" style="left:2574.84px;top:934.85px;font-size:22.9px;color:#080808;transform:scaleX(1.0939);">-</span>
<span class="t g" style="left:2743.84px;top:934.85px;font-size:22.9px;color:#080808;transform:scaleX(1.0939);">-</span>
<span class="t g" style="left:140.94px;top:962.70px;font-size:23.2px;color:#080808;transform:scaleX(1.0798);">-</span>
<span class="t g" style="left:1653.22px;top:962.70px;font-size:23.2px;color:#080808;transform:scaleX(0.9208);">Yes</span>
<span class="t g" style="left:1898.84px;top:962.85px;font-size:22.9px;color:#080808;transform:scaleX(1.0939);">-</span>
<span class="t g" style="left:2067.84px;top:962.85px;font-size:22.9px;color:#080808;transform:scaleX(1.0939);">-</span>
<span class="t g" style="left:2236.84px;top:962.85px;font-size:22.9px;color:#080808;transform:scaleX(1.0939);">-</span>
<span class="t g" style="left:2405.84px;top:962.85px;font-size:22.9px;color:#080808;transform:scaleX(1.0939);">-</span>
<span class="t g" style="left:2574.84px;top:962.85px;font-size:22.9px;color:#080808;transform:scaleX(1.0939);">-</span>
<span class="t g" style="left:2743.84px;top:962.85px;font-size:22.9px;color:#080808;transform:scaleX(1.0939);">-</span>
<span class="t g" style="left:140.94px;top:990.70px;font-size:23.2px;color:#080808;transform:scaleX(1.0798);">-</span>
<span class="t g" style="left:1653.22px;top:990.70px;font-size:23.2px;color:#080808;transform:scaleX(0.9208);">Yes</span>
<span class="t g" style="left:1898.84px;top:990.85px;font-size:22.9px;color:#080808;transform:scaleX(1.0939);">-</span>
<span class="t g" style="left:2067.84px;top:990.85px;font-size:22.9px;color:#080808;transform:scaleX(1.0939);">-</span>
<span class="t g" style="left:2236.84px;top:990.85px;font-size:22.9px;color:#080808;transform:scaleX(1.0939);">-</span>
<span class="t g" style="left:2405.84px;top:990.85px;font-size:22.9px;color:#080808;transform:scaleX(1.0939);">-</span>
<span class="t g" style="left:2574.84px;top:990.85px;font-size:22.9px;color:#080808;transform:scaleX(1.0939);">-</span>
<span class="t g" style="left:2743.84px;top:990.85px;font-size:22.9px;color:#080808;transform:scaleX(1.0939);">-</span>
<span class="t g" style="left:140.94px;top:1018.70px;font-size:23.2px;color:#080808;transform:scaleX(1.0798);">-</span>
<span class="t g" style="left:1653.22px;top:1018.70px;font-size:23.2px;color:#080808;transform:scaleX(0.9208);">Yes</span>
<span class="t g" style="left:1898.84px;top:1018.85px;font-size:22.9px;color:#080808;transform:scaleX(1.0939);">-</span>
<span class="t g" style="left:2067.84px;top:1018.85px;font-size:22.9px;color:#080808;transform:scaleX(1.0939);">-</span>
<span class="t g" style="left:2236.84px;top:1018.85px;font-size:22.9px;color:#080808;transform:scaleX(1.0939);">-</span>
<span class="t g" style="left:2405.84px;top:1018.85px;font-size:22.9px;color:#080808;transform:scaleX(1.0939);">-</span>
<span class="t g" style="left:2574.84px;top:1018.85px;font-size:22.9px;color:#080808;transform:scaleX(1.0939);">-</span>
<span class="t g" style="left:2743.84px;top:1018.85px;font-size:22.9px;color:#080808;transform:scaleX(1.0939);">-</span>
<span class="t g" style="left:140.94px;top:1046.70px;font-size:23.2px;color:#080808;transform:scaleX(1.0798);">-</span>
<span class="t g" style="left:1653.22px;top:1046.70px;font-size:23.2px;color:#080808;transform:scaleX(0.9208);">Yes</span>
<span class="t g" style="left:1898.84px;top:1046.85px;font-size:22.9px;color:#080808;transform:scaleX(1.0939);">-</span>
<span class="t g" style="left:2067.84px;top:1046.85px;font-size:22.9px;color:#080808;transform:scaleX(1.0939);">-</span>
<span class="t g" style="left:2236.84px;top:1046.85px;font-size:22.9px;color:#080808;transform:scaleX(1.0939);">-</span>
<span class="t g" style="left:2405.84px;top:1046.85px;font-size:22.9px;color:#080808;transform:scaleX(1.0939);">-</span>
<span class="t g" style="left:2574.84px;top:1046.85px;font-size:22.9px;color:#080808;transform:scaleX(1.0939);">-</span>
<span class="t g" style="left:2743.84px;top:1046.85px;font-size:22.9px;color:#080808;transform:scaleX(1.0939);">-</span>
<span class="t g" style="left:140.94px;top:1074.70px;font-size:23.2px;color:#080808;transform:scaleX(1.0798);">-</span>
<span class="t g" style="left:1653.22px;top:1074.70px;font-size:23.2px;color:#080808;transform:scaleX(0.9208);">Yes</span>
<span class="t g" style="left:1898.84px;top:1074.85px;font-size:22.9px;color:#080808;transform:scaleX(1.0939);">-</span>
<span class="t g" style="left:2067.84px;top:1074.85px;font-size:22.9px;color:#080808;transform:scaleX(1.0939);">-</span>
<span class="t g" style="left:2236.84px;top:1074.85px;font-size:22.9px;color:#080808;transform:scaleX(1.0939);">-</span>
<span class="t g" style="left:2405.84px;top:1074.85px;font-size:22.9px;color:#080808;transform:scaleX(1.0939);">-</span>
<span class="t g" style="left:2574.84px;top:1074.85px;font-size:22.9px;color:#080808;transform:scaleX(1.0939);">-</span>
<span class="t g" style="left:2743.84px;top:1074.85px;font-size:22.9px;color:#080808;transform:scaleX(1.0939);">-</span>
<span class="t g" style="left:140.94px;top:1102.70px;font-size:23.2px;color:#080808;transform:scaleX(1.0798);">-</span>
<span class="t g" style="left:1653.22px;top:1102.70px;font-size:23.2px;color:#080808;transform:scaleX(0.9208);">Yes</span>
<span class="t g" style="left:1898.84px;top:1102.85px;font-size:22.9px;color:#080808;transform:scaleX(1.0939);">-</span>
<span class="t g" style="left:2067.84px;top:1102.85px;font-size:22.9px;color:#080808;transform:scaleX(1.0939);">-</span>
<span class="t g" style="left:2236.84px;top:1102.85px;font-size:22.9px;color:#080808;transform:scaleX(1.0939);">-</span>
<span class="t g" style="left:2405.84px;top:1102.85px;font-size:22.9px;color:#080808;transform:scaleX(1.0939);">-</span>
<span class="t g" style="left:2574.84px;top:1102.85px;font-size:22.9px;color:#080808;transform:scaleX(1.0939);">-</span>
<span class="t g" style="left:2743.84px;top:1102.85px;font-size:22.9px;color:#080808;transform:scaleX(1.0939);">-</span>
<span class="t g" style="left:140.94px;top:1130.70px;font-size:23.2px;color:#080808;transform:scaleX(1.0798);">-</span>
<span class="t g" style="left:1653.22px;top:1130.70px;font-size:23.2px;color:#080808;transform:scaleX(0.9208);">Yes</span>
<span class="t g" style="left:1898.84px;top:1130.85px;font-size:22.9px;color:#080808;transform:scaleX(1.0939);">-</span>
<span class="t g" style="left:2067.84px;top:1130.85px;font-size:22.9px;color:#080808;transform:scaleX(1.0939);">-</span>
<span class="t g" style="left:2236.84px;top:1130.85px;font-size:22.9px;color:#080808;transform:scaleX(1.0939);">-</span>
<span class="t g" style="left:2405.84px;top:1130.85px;font-size:22.9px;color:#080808;transform:scaleX(1.0939);">-</span>
<span class="t g" style="left:2574.84px;top:1130.85px;font-size:22.9px;color:#080808;transform:scaleX(1.0939);">-</span>
<span class="t g" style="left:2743.84px;top:1130.85px;font-size:22.9px;color:#080808;transform:scaleX(1.0939);">-</span>
<span class="t g" style="left:140.94px;top:1158.70px;font-size:23.2px;color:#080808;transform:scaleX(1.0798);">-</span>
<span class="t g" style="left:1653.22px;top:1158.70px;font-size:23.2px;color:#080808;transform:scaleX(0.9208);">Yes</span>
<span class="t g" style="left:1898.84px;top:1158.85px;font-size:22.9px;color:#080808;transform:scaleX(1.0939);">-</span>
<span class="t g" style="left:2067.84px;top:1158.85px;font-size:22.9px;color:#080808;transform:scaleX(1.0939);">-</span>
<span class="t g" style="left:2236.84px;top:1158.85px;font-size:22.9px;color:#080808;transform:scaleX(1.0939);">-</span>
<span class="t g" style="left:2405.84px;top:1158.85px;font-size:22.9px;color:#080808;transform:scaleX(1.0939);">-</span>
<span class="t g" style="left:2574.84px;top:1158.85px;font-size:22.9px;color:#080808;transform:scaleX(1.0939);">-</span>
<span class="t g" style="left:2743.84px;top:1158.85px;font-size:22.9px;color:#080808;transform:scaleX(1.0939);">-</span>
<span class="t g" style="left:140.94px;top:1186.70px;font-size:23.2px;color:#080808;transform:scaleX(1.0798);">-</span>
<span class="t g" style="left:1653.22px;top:1186.70px;font-size:23.2px;color:#080808;transform:scaleX(0.9208);">Yes</span>
<span class="t g" style="left:1898.84px;top:1186.85px;font-size:22.9px;color:#080808;transform:scaleX(1.0939);">-</span>
<span class="t g" style="left:2067.84px;top:1186.85px;font-size:22.9px;color:#080808;transform:scaleX(1.0939);">-</span>
<span class="t g" style="left:2236.84px;top:1186.85px;font-size:22.9px;color:#080808;transform:scaleX(1.0939);">-</span>
<span class="t g" style="left:2405.84px;top:1186.85px;font-size:22.9px;color:#080808;transform:scaleX(1.0939);">-</span>
<span class="t g" style="left:2574.84px;top:1186.85px;font-size:22.9px;color:#080808;transform:scaleX(1.0939);">-</span>
<span class="t g" style="left:2743.84px;top:1186.85px;font-size:22.9px;color:#080808;transform:scaleX(1.0939);">-</span>
<span class="t g" style="left:142.88px;top:1216.75px;font-size:28.1px;color:#fff;font-weight:bold;-webkit-text-stroke:0.35px #fff;transform:scaleX(1.1117);">Total</span>
<span class="t g" style="left:1474.91px;top:1219.85px;font-size:21.9px;color:#fff;font-weight:bold;-webkit-text-stroke:0.35px #fff;transform:scaleX(1.1520);">54,000</span>
<span class="t g" style="left:1864.91px;top:1219.85px;font-size:21.9px;color:#fff;font-weight:bold;-webkit-text-stroke:0.35px #fff;transform:scaleX(1.1520);">8,250</span>
<span class="t g" style="left:2019.91px;top:1219.85px;font-size:21.9px;color:#fff;font-weight:bold;-webkit-text-stroke:0.35px #fff;transform:scaleX(1.1520);">10,750</span>
<span class="t g" style="left:2188.91px;top:1219.85px;font-size:21.9px;color:#fff;font-weight:bold;-webkit-text-stroke:0.35px #fff;transform:scaleX(1.1520);">12,000</span>
<span class="t g" style="left:2371.91px;top:1219.85px;font-size:21.9px;color:#fff;font-weight:bold;-webkit-text-stroke:0.35px #fff;transform:scaleX(1.1520);">7,500</span>
<span class="t g" style="left:2540.91px;top:1219.85px;font-size:21.9px;color:#fff;font-weight:bold;-webkit-text-stroke:0.35px #fff;transform:scaleX(1.1520);">5,750</span>
<span class="t g" style="left:2709.91px;top:1219.85px;font-size:21.9px;color:#fff;font-weight:bold;-webkit-text-stroke:0.35px #fff;transform:scaleX(1.1520);">5,000</span>
<span class="t g" style="left:142.04px;top:1377.65px;font-size:22.3px;color:#fff;font-weight:bold;-webkit-text-stroke:0.35px #fff;transform:scaleX(1.0359);">Opening Net Book Value</span>
<span class="t g" style="left:1892.18px;top:1377.85px;font-size:21.9px;color:#fff;font-weight:bold;-webkit-text-stroke:0.35px #fff;transform:scaleX(1.3251);">-</span>
<span class="t g" style="left:2033.59px;top:1377.85px;font-size:21.9px;color:#fff;font-weight:bold;-webkit-text-stroke:0.35px #fff;transform:scaleX(1.1520);">8,181</span>
<span class="t g" style="left:2188.78px;top:1377.85px;font-size:21.9px;color:#fff;font-weight:bold;-webkit-text-stroke:0.35px #fff;transform:scaleX(1.1520);">18,773</span>
<span class="t g" style="left:2357.59px;top:1377.85px;font-size:21.9px;color:#fff;font-weight:bold;-webkit-text-stroke:0.35px #fff;transform:scaleX(1.1520);">30,515</span>
<span class="t g" style="left:2526.02px;top:1377.85px;font-size:21.9px;color:#fff;font-weight:bold;-webkit-text-stroke:0.35px #fff;transform:scaleX(1.1520);">37,694</span>
<span class="t g" style="left:2695.59px;top:1377.85px;font-size:21.9px;color:#fff;font-weight:bold;-webkit-text-stroke:0.35px #fff;transform:scaleX(1.1520);">43,075</span>
<span class="t g" style="left:161.03px;top:1403.70px;font-size:23.2px;color:#080808;transform:scaleX(0.9513);">Expenditure - Amortizable</span>
<span class="t g" style="left:1729.84px;top:1404.85px;font-size:22.9px;color:#080808;transform:scaleX(1.0939);">-</span>
<span class="t g" style="left:1875.54px;top:1404.85px;font-size:22.9px;color:#080808;transform:scaleX(0.9700);">8,250</span>
<span class="t g" style="left:2032.22px;top:1404.85px;font-size:22.9px;color:#080808;transform:scaleX(0.9700);">10,750</span>
<span class="t g" style="left:2201.22px;top:1404.85px;font-size:22.9px;color:#080808;transform:scaleX(0.9700);">12,000</span>
<span class="t g" style="left:2382.54px;top:1404.85px;font-size:22.9px;color:#080808;transform:scaleX(0.9700);">7,500</span>
<span class="t g" style="left:2551.54px;top:1404.85px;font-size:22.9px;color:#080808;transform:scaleX(0.9700);">5,750</span>
<span class="t g" style="left:2720.54px;top:1404.85px;font-size:22.9px;color:#080808;transform:scaleX(0.9700);">5,000</span>
<span class="t g" style="left:161.03px;top:1431.70px;font-size:23.2px;color:#080808;transform:scaleX(0.9552);">Depreciation (Depreciation Period (Years) - 10)</span>
<span class="t g" style="left:1906.64px;top:1432.85px;font-size:22.9px;color:#080808;transform:scaleX(0.9700);">69</span>
<span class="t g" style="left:2063.15px;top:1432.85px;font-size:22.9px;color:#080808;transform:scaleX(0.9700);">158</span>
<span class="t g" style="left:2232.15px;top:1432.85px;font-size:22.9px;color:#080808;transform:scaleX(0.9700);">258</span>
<span class="t g" style="left:2401.31px;top:1432.85px;font-size:22.9px;color:#080808;transform:scaleX(0.9700);">321</span>
<span class="t g" style="left:2570.26px;top:1432.85px;font-size:22.9px;color:#080808;transform:scaleX(0.9700);">369</span>
<span class="t g" style="left:2739.09px;top:1432.85px;font-size:22.9px;color:#080808;transform:scaleX(0.9700);">410</span>
<span class="t g" style="left:142.04px;top:1461.65px;font-size:22.3px;color:#fff;font-weight:bold;-webkit-text-stroke:0.35px #fff;transform:scaleX(1.0291);">Closing Net Book Value</span>
<span class="t g" style="left:1723.18px;top:1461.85px;font-size:21.9px;color:#fff;font-weight:bold;-webkit-text-stroke:0.35px #fff;transform:scaleX(1.3251);">-</span>
<span class="t g" style="left:1864.59px;top:1461.85px;font-size:21.9px;color:#fff;font-weight:bold;-webkit-text-stroke:0.35px #fff;transform:scaleX(1.1520);">8,181</span>
<span class="t g" style="left:2019.78px;top:1461.85px;font-size:21.9px;color:#fff;font-weight:bold;-webkit-text-stroke:0.35px #fff;transform:scaleX(1.1520);">18,773</span>
<span class="t g" style="left:2188.59px;top:1461.85px;font-size:21.9px;color:#fff;font-weight:bold;-webkit-text-stroke:0.35px #fff;transform:scaleX(1.1520);">30,515</span>
<span class="t g" style="left:2357.02px;top:1461.85px;font-size:21.9px;color:#fff;font-weight:bold;-webkit-text-stroke:0.35px #fff;transform:scaleX(1.1520);">37,694</span>
<span class="t g" style="left:2526.59px;top:1461.85px;font-size:21.9px;color:#fff;font-weight:bold;-webkit-text-stroke:0.35px #fff;transform:scaleX(1.1520);">43,075</span>
<span class="t g" style="left:2695.59px;top:1461.85px;font-size:21.9px;color:#fff;font-weight:bold;-webkit-text-stroke:0.35px #fff;transform:scaleX(1.1520);">47,665</span>
<span class="t g" style="left:142.04px;top:1531.65px;font-size:22.3px;color:#fff;font-weight:bold;-webkit-text-stroke:0.35px #fff;transform:scaleX(1.0359);">Opening Net Book Value</span>
<span class="t g" style="left:1892.18px;top:1531.85px;font-size:21.9px;color:#fff;font-weight:bold;-webkit-text-stroke:0.35px #fff;transform:scaleX(1.3251);">-</span>
<span class="t g" style="left:2061.18px;top:1531.85px;font-size:21.9px;color:#fff;font-weight:bold;-webkit-text-stroke:0.35px #fff;transform:scaleX(1.3251);">-</span>
<span class="t g" style="left:2230.18px;top:1531.85px;font-size:21.9px;color:#fff;font-weight:bold;-webkit-text-stroke:0.35px #fff;transform:scaleX(1.3251);">-</span>
<span class="t g" style="left:2399.18px;top:1531.85px;font-size:21.9px;color:#fff;font-weight:bold;-webkit-text-stroke:0.35px #fff;transform:scaleX(1.3251);">-</span>
<span class="t g" style="left:2568.18px;top:1531.85px;font-size:21.9px;color:#fff;font-weight:bold;-webkit-text-stroke:0.35px #fff;transform:scaleX(1.3251);">-</span>
<span class="t g" style="left:2737.18px;top:1531.85px;font-size:21.9px;color:#fff;font-weight:bold;-webkit-text-stroke:0.35px #fff;transform:scaleX(1.3251);">-</span>
<span class="t g" style="left:161.05px;top:1557.70px;font-size:23.2px;color:#080808;transform:scaleX(0.9448);">Expenditure - Non-Amortizable</span>
<span class="t g" style="left:1898.84px;top:1558.85px;font-size:22.9px;color:#080808;transform:scaleX(1.0939);">-</span>
<span class="t g" style="left:2067.84px;top:1558.85px;font-size:22.9px;color:#080808;transform:scaleX(1.0939);">-</span>
<span class="t g" style="left:2236.84px;top:1558.85px;font-size:22.9px;color:#080808;transform:scaleX(1.0939);">-</span>
<span class="t g" style="left:2405.84px;top:1558.85px;font-size:22.9px;color:#080808;transform:scaleX(1.0939);">-</span>
<span class="t g" style="left:2574.84px;top:1558.85px;font-size:22.9px;color:#080808;transform:scaleX(1.0939);">-</span>
<span class="t g" style="left:2743.84px;top:1558.85px;font-size:22.9px;color:#080808;transform:scaleX(1.0939);">-</span>
<span class="t g" style="left:142.04px;top:1587.65px;font-size:22.3px;color:#fff;font-weight:bold;-webkit-text-stroke:0.35px #fff;transform:scaleX(1.0291);">Closing Net Book Value</span>
<span class="t g" style="left:1892.18px;top:1587.85px;font-size:21.9px;color:#fff;font-weight:bold;-webkit-text-stroke:0.35px #fff;transform:scaleX(1.3251);">-</span>
<span class="t g" style="left:2061.18px;top:1587.85px;font-size:21.9px;color:#fff;font-weight:bold;-webkit-text-stroke:0.35px #fff;transform:scaleX(1.3251);">-</span>
<span class="t g" style="left:2230.18px;top:1587.85px;font-size:21.9px;color:#fff;font-weight:bold;-webkit-text-stroke:0.35px #fff;transform:scaleX(1.3251);">-</span>
<span class="t g" style="left:2399.18px;top:1587.85px;font-size:21.9px;color:#fff;font-weight:bold;-webkit-text-stroke:0.35px #fff;transform:scaleX(1.3251);">-</span>
<span class="t g" style="left:2568.18px;top:1587.85px;font-size:21.9px;color:#fff;font-weight:bold;-webkit-text-stroke:0.35px #fff;transform:scaleX(1.3251);">-</span>
<span class="t g" style="left:2737.18px;top:1587.85px;font-size:21.9px;color:#fff;font-weight:bold;-webkit-text-stroke:0.35px #fff;transform:scaleX(1.3251);">-</span>
<div class="b" style="left:2861px;top:278px;width:29.5px;height:1394px;background:#141414;border-radius:14px;"></div>
<svg style="left:2869px;top:286px" width="15" height="11" viewBox="0 0 15 11"><path d="M7.4 0.8 Q8 0.4 8.6 1.2 L14 9.2 Q14.4 10.2 13.4 10.2 H1.6 Q0.6 10.2 1 9.2 L6.4 1.2 Z" fill="#9e9e9e"/></svg>
<div class="b" style="left:2870px;top:303.5px;width:12px;height:1311.5px;background:#9b9b9b;border-radius:6px;"></div>
<svg style="left:2869px;top:1654px" width="15" height="11" viewBox="0 0 15 11"><path d="M7.4 10.2 Q8 10.6 8.6 9.8 L14 1.8 Q14.4 0.8 13.4 0.8 H1.6 Q0.6 0.8 1 1.8 L6.4 9.8 Z" fill="#9e9e9e"/></svg>
<svg style="left:45.5px;top:1685px" width="11" height="16" viewBox="0 0 11 16"><path d="M9 1 L1.6 8 L9 15" stroke="#8a8a8a" stroke-width="1.8" fill="none"/></svg>
<svg style="left:94.5px;top:1685px" width="11" height="16" viewBox="0 0 11 16"><path d="M2 1 L9.4 8 L2 15" stroke="#e0e0e0" stroke-width="1.8" fill="none"/></svg>
<span class="t" style="left:189.25px;top:1685.60px;font-size:21.4px;color:#fff;transform:scaleX(0.9805);">Contents</span>
<div class="b" style="left:299px;top:1676px;width:128px;height:36px;background:#fff06b;border-radius:6px;"></div>
<span class="t" style="left:311.31px;top:1685.60px;font-size:21.4px;color:#1c1c1c;transform:scaleX(0.9843);">Dashboard</span>
<div class="b" style="left:440px;top:1676px;width:106px;height:36px;background:#fff06b;border-radius:6px;"></div>
<span class="t" style="left:452.13px;top:1685.60px;font-size:21.4px;color:#1c1c1c;transform:scaleX(0.9454);">Revenue</span>
<div class="b" style="left:559px;top:1676px;width:157.70000000000005px;height:36px;background:#fff06b;border-radius:6px;"></div>
<span class="t" style="left:570.38px;top:1685.60px;font-size:21.4px;color:#1c1c1c;transform:scaleX(0.9037);">COGS &amp; OPEX</span>
<div class="b" style="left:730px;top:1676px;width:89.20000000000005px;height:36px;background:#fff06b;border-radius:6px;"></div>
<span class="t" style="left:742.16px;top:1685.60px;font-size:21.4px;color:#1c1c1c;transform:scaleX(0.9867);">Payroll</span>
<div class="b" style="left:932px;top:1676px;width:113px;height:36px;background:#fff06b;border-radius:6px;"></div>
<span class="t" style="left:944.46px;top:1685.60px;font-size:21.4px;color:#1c1c1c;transform:scaleX(0.9725);">CapTable</span>
<div class="b" style="left:1058px;top:1676px;width:90px;height:36px;background:#fff06b;border-radius:6px;"></div>
<span class="t" style="left:1070.19px;top:1685.60px;font-size:21.4px;color:#1c1c1c;transform:scaleX(0.9899);">Capital</span>
<div class="b" style="left:1161px;top:1676px;width:42px;height:36px;background:#4db4ec;border-radius:6px;"></div>
<span class="t" style="left:1172.53px;top:1685.60px;font-size:21.4px;color:#1c1c1c;transform:scaleX(0.8942);">IS</span>
<div class="b" style="left:1216px;top:1676px;width:48px;height:36px;background:#4db4ec;border-radius:6px;"></div>
<span class="t" style="left:1227.85px;top:1685.60px;font-size:21.4px;color:#1c1c1c;transform:scaleX(0.8445);">CF</span>
<div class="b" style="left:1277px;top:1676px;width:48px;height:36px;background:#4db4ec;border-radius:6px;"></div>
<span class="t" style="left:1288.26px;top:1685.60px;font-size:21.4px;color:#1c1c1c;transform:scaleX(0.8689);">BS</span>
<div class="b" style="left:1338px;top:1676px;width:115px;height:36px;background:#4db4ec;border-radius:6px;"></div>
<span class="t" style="left:1350.85px;top:1685.60px;font-size:21.4px;color:#1c1c1c;transform:scaleX(0.9362);">Scenarios</span>
<div class="b" style="left:1466px;top:1676px;width:115px;height:36px;background:#4db4ec;border-radius:6px;"></div>
<span class="t" style="left:1479.70px;top:1685.60px;font-size:21.4px;color:#1c1c1c;transform:scaleX(1.0146);">Valuation</span>
<div class="b" style="left:1594px;top:1676px;width:114px;height:36px;background:#4db4ec;border-radius:6px;"></div>
<span class="t" style="left:1606.58px;top:1685.60px;font-size:21.4px;color:#1c1c1c;transform:scaleX(0.9605);">Summary</span>
<div class="b" style="left:1721px;top:1676px;width:48px;height:36px;background:#4db4ec;border-radius:6px;"></div>
<span class="t" style="left:1732.27px;top:1685.60px;font-size:21.4px;color:#1c1c1c;transform:scaleX(0.8671);">BE</span>
<div class="b" style="left:1782px;top:1676px;width:72px;height:36px;background:#4db4ec;border-radius:6px;"></div>
<span class="t" style="left:1793.46px;top:1685.60px;font-size:21.4px;color:#1c1c1c;transform:scaleX(0.9022);">ROIC</span>
<div class="b" style="left:1867px;top:1676px;width:85px;height:36px;background:#4db4ec;border-radius:6px;"></div>
<span class="t" style="left:1879.23px;top:1685.60px;font-size:21.4px;color:#1c1c1c;transform:scaleX(0.9558);">Charts</span>
<div class="b" style="left:1965px;top:1676px;width:63.59999999999991px;height:36px;background:#4db4ec;border-radius:6px;"></div>
<span class="t" style="left:1976.55px;top:1685.60px;font-size:21.4px;color:#1c1c1c;transform:scaleX(0.8773);">KPIs</span>
<div class="b" style="left:291.5px;top:1680.5px;width:1.3px;height:27px;background:#4a4a4a;"></div>
<div class="b" style="left:432.8px;top:1680.5px;width:1.3px;height:27px;background:#4a4a4a;"></div>
<div class="b" style="left:552.0px;top:1680.5px;width:1.3px;height:27px;background:#4a4a4a;"></div>
<div class="b" style="left:723.0px;top:1680.5px;width:1.3px;height:27px;background:#4a4a4a;"></div>
<div class="b" style="left:825.2px;top:1680.5px;width:1.3px;height:27px;background:#4a4a4a;"></div>
<div class="b" style="left:925.3px;top:1680.5px;width:1.3px;height:27px;background:#4a4a4a;"></div>
<div class="b" style="left:1051.0px;top:1680.5px;width:1.3px;height:27px;background:#4a4a4a;"></div>
<div class="b" style="left:1154.0px;top:1680.5px;width:1.3px;height:27px;background:#4a4a4a;"></div>
<div class="b" style="left:1209.2px;top:1680.5px;width:1.3px;height:27px;background:#4a4a4a;"></div>
<div class="b" style="left:1270.1px;top:1680.5px;width:1.3px;height:27px;background:#4a4a4a;"></div>
<div class="b" style="left:1331.0px;top:1680.5px;width:1.3px;height:27px;background:#4a4a4a;"></div>
<div class="b" style="left:1459.1px;top:1680.5px;width:1.3px;height:27px;background:#4a4a4a;"></div>
<div class="b" style="left:1587.0px;top:1680.5px;width:1.3px;height:27px;background:#4a4a4a;"></div>
<div class="b" style="left:1714.0px;top:1680.5px;width:1.3px;height:27px;background:#4a4a4a;"></div>
<div class="b" style="left:1775.0px;top:1680.5px;width:1.3px;height:27px;background:#4a4a4a;"></div>
<div class="b" style="left:1860.0px;top:1680.5px;width:1.3px;height:27px;background:#4a4a4a;"></div>
<div class="b" style="left:1958.2px;top:1680.5px;width:1.3px;height:27px;background:#4a4a4a;"></div>
<div class="b" style="left:2034.8px;top:1680.5px;width:1.3px;height:27px;background:#4a4a4a;"></div>
<div class="b" style="left:2042px;top:1676px;width:30px;height:36px;background:#4db4ec;border-radius:6px 0 0 6px;"></div>
<div class="b" style="left:2042px;top:1676px;width:30px;height:36px;overflow:hidden;"><span class="t" style="left:11.5px;top:10.30px;font-size:21.4px;color:#1c1c1c;">Sc</span></div>
<div class="b" style="left:832px;top:1670px;width:87.3px;height:42px;border-radius:0 0 7px 7px;background:linear-gradient(#ffffff,#fffde9 55%,#fffbd6);"></div>
<svg style="left:824px;top:1670px" width="8" height="8" viewBox="0 0 8 8"><path d="M0 0 H8 V8 Q8 0 0 0 Z" fill="#fff"/></svg>
<svg style="left:919.3px;top:1670px" width="8" height="8" viewBox="0 0 8 8"><path d="M8 0 H0 V8 Q0 0 8 0 Z" fill="#fff"/></svg>
<span class="t" style="left:843.36px;top:1680.60px;font-size:21.4px;color:#1c1c1c;transform:scaleX(0.8797);">CAPEX</span>
<div class="b" style="left:844px;top:1704.6px;width:63px;height:2.6px;background:#1e7e45;"></div>
<div class="b" style="left:2087.0px;top:1691px;width:4.4px;height:4.4px;border-radius:50%;background:#e6e6e6;"></div>
<div class="b" style="left:2093.2px;top:1691px;width:4.4px;height:4.4px;border-radius:50%;background:#e6e6e6;"></div>
<div class="b" style="left:2099.4px;top:1691px;width:4.4px;height:4.4px;border-radius:50%;background:#e6e6e6;"></div>
<div class="b" style="left:2135.4px;top:1692.9px;width:15.8px;height:1.6px;background:#e6e6e6;"></div>
<div class="b" style="left:2142.5px;top:1685.8px;width:1.6px;height:15.8px;background:#e6e6e6;"></div>
<div class="b" style="left:2190.6px;top:1687.8px;width:2.8px;height:2.8px;background:#e6e6e6;"></div>
<div class="b" style="left:2190.6px;top:1693.3999999999999px;width:2.8px;height:2.8px;background:#e6e6e6;"></div>
<div class="b" style="left:2190.6px;top:1699.0px;width:2.8px;height:2.8px;background:#e6e6e6;"></div>
<div class="b" style="left:2216px;top:1679.5px;width:644px;height:27px;background:#151515;border-radius:13.5px;"></div>
<svg style="left:2224px;top:1686.5px" width="11" height="14" viewBox="0 0 11 14"><path d="M0.8 7 Q0.6 6.4 1.4 5.8 L9.4 0.8 Q10.4 0.4 10.4 1.6 V12.4 Q10.4 13.6 9.4 13.2 L1.4 8.2 Z" fill="#9e9e9e"/></svg>
<svg style="left:2843px;top:1686.5px" width="11" height="14" viewBox="0 0 11 14"><path d="M10.2 7 Q10.4 6.4 9.6 5.8 L1.6 0.8 Q0.6 0.4 0.6 1.6 V12.4 Q0.6 13.6 1.6 13.2 L9.6 8.2 Z" fill="#9e9e9e"/></svg>
<div class="b" style="left:2241.6px;top:1686.5px;width:55.6px;height:13px;background:#9d9d9d;border-radius:6.5px;"></div>
<div class="b" style="left:11px;top:1718px;width:2880px;height:33px;background:#151515;"></div>
<div class="b" style="left:11px;top:1717.5px;width:2880px;height:1px;background:#2b2b2b;"></div>
<span class="t" style="left:26.61px;top:1727.80px;font-size:16px;color:#f0f0f0;transform:scaleX(0.9297);">Ready</span>
<svg style="left:99px;top:1726px" width="23" height="20" viewBox="0 0 23 20"><path d="M1 18 V1 H21 V8" stroke="#e0e0e0" stroke-width="1.5" fill="none"/><path d="M1 4.6 H21" stroke="#e0e0e0" stroke-width="1.4"/><path d="M4 8.6 H9 M4 12 H8 M4 15.4 H8" stroke="#e0e0e0" stroke-width="1.4"/><circle cx="15" cy="13" r="5.6" stroke="#e0e0e0" stroke-width="1.5" fill="none"/><circle cx="15" cy="13" r="2.3" fill="#e0e0e0"/></svg>
<svg style="left:146px;top:1724px" width="22" height="23" viewBox="0 0 22 23"><circle cx="10.4" cy="3.4" r="2.3" stroke="#f0f0f0" stroke-width="1.6" fill="none"/><path d="M1.6 5.2 C4.4 8 6.4 8.6 7.6 8.6 H13.2 C14.4 8.6 16.2 8 18.8 5.2" stroke="#f0f0f0" stroke-width="2" fill="none" stroke-linecap="round"/><path d="M7.4 8.6 V13.4 L4.6 20.6 M13.4 8.6 V11.6" stroke="#f0f0f0" stroke-width="2" fill="none" stroke-linecap="round"/><path d="M7.4 13.6 Q10 11.6 11.4 14.2" stroke="#f0f0f0" stroke-width="1.6" fill="none"/><path d="M12.2 13.8 L20.6 22 M20.6 13.8 L12.2 22" stroke="#f0f0f0" stroke-width="1.7"/></svg>
<span class="t" style="left:172.61px;top:1727.80px;font-size:16px;color:#fff;font-weight:bold;transform:scaleX(0.9856);">Accessibility: Investigate</span>
<div class="b" style="left:2445px;top:1718.5px;width:60px;height:31.5px;background:#242424;"></div>
<svg style="left:2464px;top:1725px" width="21" height="19" viewBox="0 0 21 19"><rect x="0.9" y="0.9" width="18.8" height="17.2" stroke="#e6e6e6" stroke-width="1.6" fill="none"/><path d="M7.2 0.9 V18.1 M13.5 0.9 V18.1 M0.9 6.6 H19.7 M0.9 12.4 H19.7" stroke="#e6e6e6" stroke-width="1.5"/></svg>
<svg style="left:2524px;top:1725px" width="22" height="19" viewBox="0 0 22 19"><rect x="0.9" y="0.9" width="20" height="17.2" stroke="#e6e6e6" stroke-width="1.6" fill="none"/><rect x="5.2" y="4.4" width="11.4" height="10.4" stroke="#e6e6e6" stroke-width="1.4" fill="none"/><path d="M7.6 7.6 H14.2 M7.6 10 H14.2 M7.6 12.2 H14.2" stroke="#e6e6e6" stroke-width="1.2"/></svg>
<svg style="left:2584px;top:1725px" width="22" height="19" viewBox="0 0 22 19"><rect x="0.9" y="0.9" width="20" height="17.2" stroke="#e6e6e6" stroke-width="1.6" fill="none"/><path d="M0.9 10.4 H8.4 V0.9 M8.4 10.4 H20.9" stroke="#e6e6e6" stroke-width="1.6" fill="none"/></svg>
<div class="b" style="left:2633.3px;top:1734px;width:11px;height:1.2px;background:#e0e0e0;"></div>
<div class="b" style="left:2652.7px;top:1733.8px;width:148.5px;height:1.8px;background:#a8a8a8;"></div>
<div class="b" style="left:2726.2px;top:1730.5px;width:1.4px;height:8.4px;background:#b0b0b0;"></div>
<div class="b" style="left:2733px;top:1726.4px;width:8.4px;height:17px;background:#b4b4b4;"></div>
<div class="b" style="left:2809px;top:1734px;width:11.6px;height:1.2px;background:#e0e0e0;"></div>
<div class="b" style="left:2814.2px;top:1728.8px;width:1.2px;height:11.6px;background:#e0e0e0;"></div>
<span class="t" style="left:2839.43px;top:1728.20px;font-size:15.2px;color:#f0f0f0;transform:scaleX(1.0268);">140%</span>
</body></html>
